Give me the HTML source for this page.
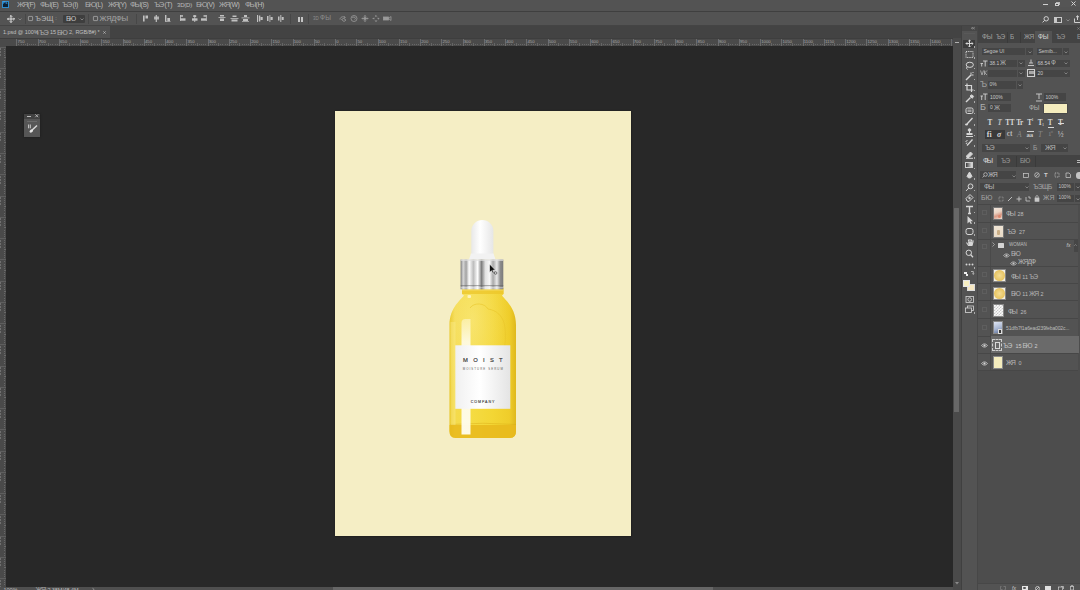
<!DOCTYPE html><html><head><meta charset="utf-8"><style>
*{margin:0;padding:0;box-sizing:border-box}
html,body{width:1080px;height:590px;overflow:hidden;background:#282828;font-family:"Liberation Sans",sans-serif}
div,span,svg{position:absolute}
svg{overflow:visible}
.t{color:#c8c8c8;font-size:6px;line-height:6px;white-space:nowrap}
.cj{background:#b4b4b4;border-radius:.5px}
</style></head><body><div style="left:0px;top:0px;width:1080px;height:11px;background:#535353;"></div><div style="left:0px;top:11px;width:1080px;height:1px;background:#3f3f3f;"></div><div style="left:2px;top:1px;width:7px;height:7px;background:#0a2136;border:.8px solid #2f8fd0"></div><span class="t" style="left:3px;top:2.4px;font-size:3.6px;line-height:3.6px;color:#4aa6ee;font-weight:bold">Ps</span><span class="t" style="left:17px;top:1.08px;font-size:7.80px;line-height:7.80px;letter-spacing:-1.46px;color:#d0d0d0;opacity:0.72">ЖЯ</span><span class="t" style="left:27.6px;top:1.8px;font-size:6.8px;line-height:6.8px;color:#bdbdbd;letter-spacing:-.4px">(F)</span><span class="t" style="left:40px;top:1.08px;font-size:7.80px;line-height:7.80px;letter-spacing:-1.46px;color:#d0d0d0;opacity:0.72">ФЫ</span><span class="t" style="left:50.6px;top:1.8px;font-size:6.8px;line-height:6.8px;color:#bdbdbd;letter-spacing:-.4px">(E)</span><span class="t" style="left:62px;top:1.08px;font-size:7.80px;line-height:7.80px;letter-spacing:-1.46px;color:#d0d0d0;opacity:0.72">ЪЭ</span><span class="t" style="left:72.6px;top:1.8px;font-size:6.8px;line-height:6.8px;color:#bdbdbd;letter-spacing:-.4px">(I)</span><span class="t" style="left:85px;top:1.08px;font-size:7.80px;line-height:7.80px;letter-spacing:-1.46px;color:#d0d0d0;opacity:0.72">БЮ</span><span class="t" style="left:95.6px;top:1.8px;font-size:6.8px;line-height:6.8px;color:#bdbdbd;letter-spacing:-.4px">(L)</span><span class="t" style="left:108px;top:1.08px;font-size:7.80px;line-height:7.80px;letter-spacing:-1.46px;color:#d0d0d0;opacity:0.72">ЖЯ</span><span class="t" style="left:118.6px;top:1.8px;font-size:6.8px;line-height:6.8px;color:#bdbdbd;letter-spacing:-.4px">(Y)</span><span class="t" style="left:130px;top:1.08px;font-size:7.80px;line-height:7.80px;letter-spacing:-1.46px;color:#d0d0d0;opacity:0.72">ФЫ</span><span class="t" style="left:140.6px;top:1.8px;font-size:6.8px;line-height:6.8px;color:#bdbdbd;letter-spacing:-.4px">(S)</span><span class="t" style="left:154px;top:1.08px;font-size:7.80px;line-height:7.80px;letter-spacing:-1.46px;color:#d0d0d0;opacity:0.72">ЪЭ</span><span class="t" style="left:164.6px;top:1.8px;font-size:6.8px;line-height:6.8px;color:#bdbdbd;letter-spacing:-.4px">(T)</span><span class="t" style="left:177px;top:2.3px;font-size:6px;line-height:6px;color:#bdbdbd;letter-spacing:-.2px">3D(D)</span><span class="t" style="left:196px;top:1.08px;font-size:7.80px;line-height:7.80px;letter-spacing:-1.46px;color:#d0d0d0;opacity:0.72">БЮ</span><span class="t" style="left:206.6px;top:1.8px;font-size:6.8px;line-height:6.8px;color:#bdbdbd;letter-spacing:-.4px">(V)</span><span class="t" style="left:219px;top:1.08px;font-size:7.80px;line-height:7.80px;letter-spacing:-1.46px;color:#d0d0d0;opacity:0.72">ЖЯ</span><span class="t" style="left:229.6px;top:1.8px;font-size:6.8px;line-height:6.8px;color:#bdbdbd;letter-spacing:-.4px">(W)</span><span class="t" style="left:245px;top:1.08px;font-size:7.80px;line-height:7.80px;letter-spacing:-1.46px;color:#d0d0d0;opacity:0.72">ФЫ</span><span class="t" style="left:255.6px;top:1.8px;font-size:6.8px;line-height:6.8px;color:#bdbdbd;letter-spacing:-.4px">(H)</span><div style="left:1040px;top:0px;width:40px;height:7px;background:#555555;"></div><div style="left:1043px;top:4px;width:5px;height:1px;background:#cfcfcf;"></div><div style="left:1056px;top:1.5px;width:4px;height:3px;background:transparent;border:1px solid #b8b8b8"></div><div style="left:1055px;top:2.5px;width:4px;height:3px;background:#555555;border:1px solid #d0d0d0"></div><svg style="left:1071px;top:1px" width="5" height="5" viewBox="0 0 5 5" fill="none" stroke="#d2d2d2" stroke-width="1"><path d="M0.5 0.5L4.5 4.5M4.5 0.5L0.5 4.5"/></svg><div style="left:0px;top:12px;width:1080px;height:13px;background:#535353;"></div><div style="left:0px;top:25px;width:1080px;height:1px;background:#444444;"></div><svg style="left:7px;top:15px" width="8" height="8" viewBox="0 0 8 8" fill="none" stroke="#e0e0e0" stroke-width="1"><path d="M4 0.5V7.5M0.5 4H7.5"/><path d="M2.8 1.7L4 0.5L5.2 1.7M2.8 6.3L4 7.5L5.2 6.3M1.7 2.8L0.5 4L1.7 5.2M6.3 2.8L7.5 4L6.3 5.2"/></svg><svg style="left:18px;top:18px" width="4" height="3" viewBox="0 0 4 3" fill="none" stroke="#9a9a9a" stroke-width="0.7"><path d="M0.5 0.5L2 2L3.5 0.5"/></svg><div style="left:25px;top:14px;width:1px;height:10px;background:#474747;"></div><svg style="left:27.8px;top:16.2px" width="5" height="5" viewBox="0 0 5 5" fill="none" stroke="#a8a8a8" stroke-width="0.8"><rect x=".4" y=".4" width="4.2" height="4.2" rx=".6"/></svg><span class="t" style="left:35px;top:14.61px;font-size:7.54px;line-height:7.54px;letter-spacing:0.02px;color:#d0d0d0;opacity:0.78">ЪЭЩ</span><span class="t" style="left:55.3px;top:15.8px;font-size:5.5px;line-height:5.5px;color:#b0b0b0;">:</span><div style="left:63px;top:15px;width:22px;height:8px;background:#3e3e3e;border-radius:1px"></div><span class="t" style="left:66px;top:15.96px;font-size:7.15px;line-height:7.15px;letter-spacing:-1.65px;color:#d0d0d0;opacity:0.91">БЮ</span><svg style="left:80px;top:18px" width="4" height="3" viewBox="0 0 4 3" fill="none" stroke="#a0a0a0" stroke-width="0.7"><path d="M0.5 0.5L2 2L3.5 0.5"/></svg><div style="left:88px;top:14px;width:1px;height:10px;background:#474747;"></div><svg style="left:92.8px;top:16.2px" width="5" height="5" viewBox="0 0 5 5" fill="none" stroke="#a8a8a8" stroke-width="0.8"><rect x=".4" y=".4" width="4.2" height="4.2" rx=".6"/></svg><span class="t" style="left:99.5px;top:14.61px;font-size:7.54px;line-height:7.54px;letter-spacing:-0.28px;color:#d0d0d0;opacity:0.65">ЖЯДФЫ</span><div style="left:136px;top:14px;width:1px;height:10px;background:#474747;"></div><svg style="left:143px;top:15.3px" width="7" height="7" viewBox="0 0 7 7" fill="none" stroke="#c0c0c0" stroke-width="0.8"><rect x="0" y="0.5" width="1.6" height="6" fill="#c0c0c0" stroke="none"/><rect x="2.5" y="0.5" width="2.5" height="3" fill="#c0c0c0" stroke="none"/></svg><svg style="left:154px;top:15.3px" width="7" height="7" viewBox="0 0 7 7" fill="none" stroke="#c0c0c0" stroke-width="0.8"><rect x="1.7" y="0" width="1.2" height="7" fill="#c0c0c0" stroke="none"/><rect x="0" y="1.5" width="5" height="3" fill="#c0c0c0" stroke="none" opacity=".85"/></svg><svg style="left:165px;top:15.3px" width="7" height="7" viewBox="0 0 7 7" fill="none" stroke="#c0c0c0" stroke-width="0.8"><rect x="0" y="0" width="1.4" height="6.5" fill="#c0c0c0" stroke="none"/><rect x="2.3" y="3" width="2.7" height="3" fill="#c0c0c0" stroke="none"/><rect x="0" y="6.2" width="5.5" height=".7" fill="#c0c0c0" stroke="none"/></svg><svg style="left:180px;top:15.3px" width="7" height="7" viewBox="0 0 7 7" fill="none" stroke="#c0c0c0" stroke-width="0.8"><rect x="0" y="0.2" width="3" height="1.5" fill="#c0c0c0" stroke="none"/><rect x="0" y="3.3" width="5.5" height="2.4" fill="#c0c0c0" stroke="none"/><rect x="0" y="0" width=".8" height="6" fill="#c0c0c0" stroke="none"/></svg><svg style="left:191.5px;top:15.3px" width="7" height="7" viewBox="0 0 7 7" fill="none" stroke="#c0c0c0" stroke-width="0.8"><rect x="1.2" y="0.2" width="3" height="1.8" fill="#c0c0c0" stroke="none"/><rect x="0" y="3.3" width="5.5" height="2.4" fill="#c0c0c0" stroke="none"/><rect x="2.3" y="0" width=".9" height="7" fill="#c0c0c0" stroke="none"/></svg><svg style="left:201px;top:15.3px" width="7" height="7" viewBox="0 0 7 7" fill="none" stroke="#c0c0c0" stroke-width="0.8"><rect x="2.5" y="0.2" width="3" height="1.5" fill="#c0c0c0" stroke="none"/><rect x="0" y="3.3" width="5.5" height="2.4" fill="#c0c0c0" stroke="none"/><rect x="4.9" y="0" width=".8" height="6" fill="#c0c0c0" stroke="none"/></svg><svg style="left:219px;top:15.3px" width="7" height="7" viewBox="0 0 7 7" fill="none" stroke="#c0c0c0" stroke-width="0.8"><rect x="1" y="0" width="4" height="1.5" fill="#c0c0c0" stroke="none"/><rect x="-.5" y="2" width="7" height=".8" fill="#c0c0c0" stroke="none"/><rect x="1" y="3.5" width="4" height="2.5" fill="#c0c0c0" stroke="none"/></svg><svg style="left:231px;top:15.3px" width="7" height="7" viewBox="0 0 7 7" fill="none" stroke="#c0c0c0" stroke-width="0.8"><rect x="1.5" y="0.5" width="4" height="1.5" fill="#c0c0c0" stroke="none"/><rect x="-.5" y="3" width="8" height=".8" fill="#c0c0c0" stroke="none"/><rect x="0.5" y="4.5" width="6" height="2" fill="#c0c0c0" stroke="none"/></svg><svg style="left:242px;top:15.3px" width="7" height="7" viewBox="0 0 7 7" fill="none" stroke="#c0c0c0" stroke-width="0.8"><rect x="2" y="0" width="3" height="2" fill="#c0c0c0" stroke="none"/><rect x="-.5" y="2.5" width="8" height=".8" fill="#c0c0c0" stroke="none"/><rect x="1" y="4" width="5" height="2" fill="#c0c0c0" stroke="none"/><rect x="0" y="6.3" width="7" height=".7" fill="#c0c0c0" stroke="none"/></svg><svg style="left:256.5px;top:15.3px" width="7" height="7" viewBox="0 0 7 7" fill="none" stroke="#c0c0c0" stroke-width="0.8"><rect x="0" y="0" width="1" height="7" fill="#c0c0c0" stroke="none"/><rect x="1.8" y="0.5" width="1.5" height="6" fill="#c0c0c0" stroke="none"/><rect x="3.5" y="2" width="2.2" height="3" fill="#c0c0c0" stroke="none"/></svg><svg style="left:267px;top:15.3px" width="7" height="7" viewBox="0 0 7 7" fill="none" stroke="#c0c0c0" stroke-width="0.8"><rect x="0" y="1" width="1.5" height="5" fill="#c0c0c0" stroke="none"/><rect x="2.5" y="0" width=".8" height="7" fill="#c0c0c0" stroke="none"/><rect x="3.5" y="2" width="2.2" height="3" fill="#c0c0c0" stroke="none"/></svg><svg style="left:278px;top:15.3px" width="7" height="7" viewBox="0 0 7 7" fill="none" stroke="#c0c0c0" stroke-width="0.8"><rect x="0" y="1.5" width="1.5" height="4" fill="#c0c0c0" stroke="none"/><rect x="2.3" y="0" width="1" height="7" fill="#c0c0c0" stroke="none"/><rect x="3.7" y="2" width="2" height="3" fill="#c0c0c0" stroke="none"/></svg><div style="left:290px;top:14px;width:1px;height:10px;background:#474747;"></div><div style="left:297.5px;top:16.5px;width:2px;height:5px;background:#c4c4c4;"></div><div style="left:300.5px;top:16.5px;width:2px;height:5px;background:#c4c4c4;"></div><div style="left:308px;top:14px;width:1px;height:10px;background:#474747;"></div><span class="t" style="left:313px;top:16.5px;font-size:4.5px;line-height:4.5px;color:#8c8c8c;">3D</span><span class="t" style="left:320px;top:15.23px;font-size:6.50px;line-height:6.50px;letter-spacing:0.41px;color:#d0d0d0;opacity:0.45">ФЫ</span><svg style="left:339px;top:14.8px" width="8" height="7" viewBox="0 0 8 7" fill="none" stroke="#9a9a9a" stroke-width="0.8"><path d="M1 4.5C1 2 4 1 6 2.5M5 1.2L6.3 2.6L4.8 3.4"/><path d="M2.5 4.5L4.5 3.5L7 5L5 6.5Z"/></svg><svg style="left:350px;top:14.8px" width="8" height="7" viewBox="0 0 8 7" fill="none" stroke="#9a9a9a" stroke-width="0.8"><circle cx="4" cy="3.5" r="3"/><path d="M2.2 2.8C3 1.8 5 1.8 5.6 3.2L4.6 4.6"/></svg><svg style="left:361px;top:14.8px" width="8" height="7" viewBox="0 0 8 7" fill="none" stroke="#9a9a9a" stroke-width="0.8"><path d="M4 0.5V6.5M1 3.5H7M3 1.5L4 .5L5 1.5M3 5.5L4 6.5L5 5.5M2 2.5L1 3.5L2 4.5M6 2.5L7 3.5L6 4.5"/><circle cx="4" cy="3.5" r="1" fill="#9a9a9a"/></svg><svg style="left:372px;top:14.8px" width="8" height="7" viewBox="0 0 8 7" fill="none" stroke="#9a9a9a" stroke-width="0.8"><path d="M4 0.5V2M4 5V6.5M1 3.5H2.5M5.5 3.5H7M3.2 1.3L4 .5L4.8 1.3M3.2 5.7L4 6.5L4.8 5.7M1.8 2.7L1 3.5L1.8 4.3M6.2 2.7L7 3.5L6.2 4.3"/></svg><svg style="left:383px;top:14.8px" width="8" height="7" viewBox="0 0 8 7" fill="none" stroke="#9a9a9a" stroke-width="0.8"><rect x=".5" y="2" width="5" height="3" fill="#9a9a9a"/><path d="M5.5 3.5L8 1.5V5.5Z"/></svg><svg style="left:1042px;top:16px" width="7" height="7" viewBox="0 0 7 7" fill="none" stroke="#d2d2d2" stroke-width="1"><circle cx="4.2" cy="2.8" r="2.2"/><path d="M2.6 4.4L0.6 6.4"/></svg><div style="left:1054px;top:16.5px;width:7.5px;height:6px;background:transparent;border:.9px solid #c8c8c8"></div><div style="left:1054.8px;top:17.3px;width:2.3px;height:4.4px;background:#c8c8c8;"></div><svg style="left:1066px;top:19px" width="4" height="3" viewBox="0 0 4 3" fill="none" stroke="#a0a0a0" stroke-width="0.7"><path d="M0.5 0.5L2 2L3.5 0.5"/></svg><svg style="left:1074px;top:15px" width="7" height="8" viewBox="0 0 7 8" fill="none" stroke="#cfcfcf" stroke-width="1"><path d="M0.5 3.5V7.5H6.5V3.5M3.5 5V0.8M2 2.2L3.5 0.8L5 2.2"/></svg><div style="left:0px;top:26px;width:961px;height:12px;background:#434343;"></div><div style="left:0px;top:26px;width:110px;height:12px;background:#515151;"></div><span class="t" style="left:3px;top:30px;font-size:5.5px;line-height:5.5px;color:#c0c0c0;letter-spacing:-.05px">1.psd @ 100%</span><span class="t" style="left:36.6px;top:30px;font-size:5.5px;line-height:5.5px;color:#c0c0c0;">(</span><span class="t" style="left:38.9px;top:29.14px;font-size:7.28px;line-height:7.28px;letter-spacing:-1.26px;color:#d0d0d0;opacity:0.72">ЪЭ</span><span class="t" style="left:50px;top:30px;font-size:5.5px;line-height:5.5px;color:#c0c0c0;">15</span><span class="t" style="left:57px;top:29.14px;font-size:7.28px;line-height:7.28px;letter-spacing:-1.26px;color:#d0d0d0;opacity:0.72">БЮ</span><span class="t" style="left:69px;top:30px;font-size:5.5px;line-height:5.5px;color:#c0c0c0;">2,</span><span class="t" style="left:75.5px;top:30px;font-size:5.5px;line-height:5.5px;color:#c0c0c0;letter-spacing:-.1px">RGB/8#)</span><span class="t" style="left:97.5px;top:30px;font-size:5.5px;line-height:5.5px;color:#c0c0c0;">*</span><svg style="left:102.5px;top:30.8px" width="3" height="3" viewBox="0 0 3 3" fill="none" stroke="#bdbdbd" stroke-width="0.7"><path d="M0.3 0.3L2.7 2.7M2.7 0.3L0.3 2.7"/></svg><div style="left:0px;top:38px;width:953px;height:8px;background:#4a4a4a;"></div><div style="left:0px;top:38px;width:953px;height:0.6px;background:#3e3e3e;"></div><div style="left:0px;top:46px;width:6px;height:541px;background:#4a4a4a;"></div><div style="left:5.5px;top:46px;width:0.6px;height:541px;background:#3f3f3f;"></div><div style="left:16.25px;top:39px;width:.7px;height:6.5px;background:#6c6c6c"></div><span class="t" style="left:17.45px;top:39.5px;font-size:4.3px;line-height:4.3px;color:#a8a8a8">750</span><div style="left:18.38px;top:44px;width:.7px;height:1.2px;background:#686868"></div><div style="left:20.50px;top:44px;width:.7px;height:1.2px;background:#686868"></div><div style="left:22.62px;top:44px;width:.7px;height:1.2px;background:#686868"></div><div style="left:24.75px;top:44px;width:.7px;height:1.2px;background:#686868"></div><div style="left:26.88px;top:43px;width:.7px;height:2.5px;background:#666"></div><div style="left:29.00px;top:44px;width:.7px;height:1.2px;background:#686868"></div><div style="left:31.12px;top:44px;width:.7px;height:1.2px;background:#686868"></div><div style="left:33.25px;top:44px;width:.7px;height:1.2px;background:#686868"></div><div style="left:35.38px;top:44px;width:.7px;height:1.2px;background:#686868"></div><div style="left:37.50px;top:39px;width:.7px;height:6.5px;background:#6c6c6c"></div><span class="t" style="left:38.70px;top:39.5px;font-size:4.3px;line-height:4.3px;color:#a8a8a8">700</span><div style="left:39.62px;top:44px;width:.7px;height:1.2px;background:#686868"></div><div style="left:41.75px;top:44px;width:.7px;height:1.2px;background:#686868"></div><div style="left:43.88px;top:44px;width:.7px;height:1.2px;background:#686868"></div><div style="left:46.00px;top:44px;width:.7px;height:1.2px;background:#686868"></div><div style="left:48.12px;top:43px;width:.7px;height:2.5px;background:#666"></div><div style="left:50.25px;top:44px;width:.7px;height:1.2px;background:#686868"></div><div style="left:52.38px;top:44px;width:.7px;height:1.2px;background:#686868"></div><div style="left:54.50px;top:44px;width:.7px;height:1.2px;background:#686868"></div><div style="left:56.62px;top:44px;width:.7px;height:1.2px;background:#686868"></div><div style="left:58.75px;top:39px;width:.7px;height:6.5px;background:#6c6c6c"></div><span class="t" style="left:59.95px;top:39.5px;font-size:4.3px;line-height:4.3px;color:#a8a8a8">650</span><div style="left:60.88px;top:44px;width:.7px;height:1.2px;background:#686868"></div><div style="left:63.00px;top:44px;width:.7px;height:1.2px;background:#686868"></div><div style="left:65.12px;top:44px;width:.7px;height:1.2px;background:#686868"></div><div style="left:67.25px;top:44px;width:.7px;height:1.2px;background:#686868"></div><div style="left:69.38px;top:43px;width:.7px;height:2.5px;background:#666"></div><div style="left:71.50px;top:44px;width:.7px;height:1.2px;background:#686868"></div><div style="left:73.62px;top:44px;width:.7px;height:1.2px;background:#686868"></div><div style="left:75.75px;top:44px;width:.7px;height:1.2px;background:#686868"></div><div style="left:77.88px;top:44px;width:.7px;height:1.2px;background:#686868"></div><div style="left:80.00px;top:39px;width:.7px;height:6.5px;background:#6c6c6c"></div><span class="t" style="left:81.20px;top:39.5px;font-size:4.3px;line-height:4.3px;color:#a8a8a8">600</span><div style="left:82.12px;top:44px;width:.7px;height:1.2px;background:#686868"></div><div style="left:84.25px;top:44px;width:.7px;height:1.2px;background:#686868"></div><div style="left:86.38px;top:44px;width:.7px;height:1.2px;background:#686868"></div><div style="left:88.50px;top:44px;width:.7px;height:1.2px;background:#686868"></div><div style="left:90.62px;top:43px;width:.7px;height:2.5px;background:#666"></div><div style="left:92.75px;top:44px;width:.7px;height:1.2px;background:#686868"></div><div style="left:94.88px;top:44px;width:.7px;height:1.2px;background:#686868"></div><div style="left:97.00px;top:44px;width:.7px;height:1.2px;background:#686868"></div><div style="left:99.12px;top:44px;width:.7px;height:1.2px;background:#686868"></div><div style="left:101.25px;top:39px;width:.7px;height:6.5px;background:#6c6c6c"></div><span class="t" style="left:102.45px;top:39.5px;font-size:4.3px;line-height:4.3px;color:#a8a8a8">550</span><div style="left:103.38px;top:44px;width:.7px;height:1.2px;background:#686868"></div><div style="left:105.50px;top:44px;width:.7px;height:1.2px;background:#686868"></div><div style="left:107.62px;top:44px;width:.7px;height:1.2px;background:#686868"></div><div style="left:109.75px;top:44px;width:.7px;height:1.2px;background:#686868"></div><div style="left:111.88px;top:43px;width:.7px;height:2.5px;background:#666"></div><div style="left:114.00px;top:44px;width:.7px;height:1.2px;background:#686868"></div><div style="left:116.12px;top:44px;width:.7px;height:1.2px;background:#686868"></div><div style="left:118.25px;top:44px;width:.7px;height:1.2px;background:#686868"></div><div style="left:120.38px;top:44px;width:.7px;height:1.2px;background:#686868"></div><div style="left:122.50px;top:39px;width:.7px;height:6.5px;background:#6c6c6c"></div><span class="t" style="left:123.70px;top:39.5px;font-size:4.3px;line-height:4.3px;color:#a8a8a8">500</span><div style="left:124.62px;top:44px;width:.7px;height:1.2px;background:#686868"></div><div style="left:126.75px;top:44px;width:.7px;height:1.2px;background:#686868"></div><div style="left:128.88px;top:44px;width:.7px;height:1.2px;background:#686868"></div><div style="left:131.00px;top:44px;width:.7px;height:1.2px;background:#686868"></div><div style="left:133.12px;top:43px;width:.7px;height:2.5px;background:#666"></div><div style="left:135.25px;top:44px;width:.7px;height:1.2px;background:#686868"></div><div style="left:137.38px;top:44px;width:.7px;height:1.2px;background:#686868"></div><div style="left:139.50px;top:44px;width:.7px;height:1.2px;background:#686868"></div><div style="left:141.62px;top:44px;width:.7px;height:1.2px;background:#686868"></div><div style="left:143.75px;top:39px;width:.7px;height:6.5px;background:#6c6c6c"></div><span class="t" style="left:144.95px;top:39.5px;font-size:4.3px;line-height:4.3px;color:#a8a8a8">450</span><div style="left:145.88px;top:44px;width:.7px;height:1.2px;background:#686868"></div><div style="left:148.00px;top:44px;width:.7px;height:1.2px;background:#686868"></div><div style="left:150.12px;top:44px;width:.7px;height:1.2px;background:#686868"></div><div style="left:152.25px;top:44px;width:.7px;height:1.2px;background:#686868"></div><div style="left:154.38px;top:43px;width:.7px;height:2.5px;background:#666"></div><div style="left:156.50px;top:44px;width:.7px;height:1.2px;background:#686868"></div><div style="left:158.62px;top:44px;width:.7px;height:1.2px;background:#686868"></div><div style="left:160.75px;top:44px;width:.7px;height:1.2px;background:#686868"></div><div style="left:162.88px;top:44px;width:.7px;height:1.2px;background:#686868"></div><div style="left:165.00px;top:39px;width:.7px;height:6.5px;background:#6c6c6c"></div><span class="t" style="left:166.20px;top:39.5px;font-size:4.3px;line-height:4.3px;color:#a8a8a8">400</span><div style="left:167.12px;top:44px;width:.7px;height:1.2px;background:#686868"></div><div style="left:169.25px;top:44px;width:.7px;height:1.2px;background:#686868"></div><div style="left:171.38px;top:44px;width:.7px;height:1.2px;background:#686868"></div><div style="left:173.50px;top:44px;width:.7px;height:1.2px;background:#686868"></div><div style="left:175.62px;top:43px;width:.7px;height:2.5px;background:#666"></div><div style="left:177.75px;top:44px;width:.7px;height:1.2px;background:#686868"></div><div style="left:179.88px;top:44px;width:.7px;height:1.2px;background:#686868"></div><div style="left:182.00px;top:44px;width:.7px;height:1.2px;background:#686868"></div><div style="left:184.12px;top:44px;width:.7px;height:1.2px;background:#686868"></div><div style="left:186.25px;top:39px;width:.7px;height:6.5px;background:#6c6c6c"></div><span class="t" style="left:187.45px;top:39.5px;font-size:4.3px;line-height:4.3px;color:#a8a8a8">350</span><div style="left:188.38px;top:44px;width:.7px;height:1.2px;background:#686868"></div><div style="left:190.50px;top:44px;width:.7px;height:1.2px;background:#686868"></div><div style="left:192.62px;top:44px;width:.7px;height:1.2px;background:#686868"></div><div style="left:194.75px;top:44px;width:.7px;height:1.2px;background:#686868"></div><div style="left:196.88px;top:43px;width:.7px;height:2.5px;background:#666"></div><div style="left:199.00px;top:44px;width:.7px;height:1.2px;background:#686868"></div><div style="left:201.12px;top:44px;width:.7px;height:1.2px;background:#686868"></div><div style="left:203.25px;top:44px;width:.7px;height:1.2px;background:#686868"></div><div style="left:205.38px;top:44px;width:.7px;height:1.2px;background:#686868"></div><div style="left:207.50px;top:39px;width:.7px;height:6.5px;background:#6c6c6c"></div><span class="t" style="left:208.70px;top:39.5px;font-size:4.3px;line-height:4.3px;color:#a8a8a8">300</span><div style="left:209.62px;top:44px;width:.7px;height:1.2px;background:#686868"></div><div style="left:211.75px;top:44px;width:.7px;height:1.2px;background:#686868"></div><div style="left:213.88px;top:44px;width:.7px;height:1.2px;background:#686868"></div><div style="left:216.00px;top:44px;width:.7px;height:1.2px;background:#686868"></div><div style="left:218.12px;top:43px;width:.7px;height:2.5px;background:#666"></div><div style="left:220.25px;top:44px;width:.7px;height:1.2px;background:#686868"></div><div style="left:222.38px;top:44px;width:.7px;height:1.2px;background:#686868"></div><div style="left:224.50px;top:44px;width:.7px;height:1.2px;background:#686868"></div><div style="left:226.62px;top:44px;width:.7px;height:1.2px;background:#686868"></div><div style="left:228.75px;top:39px;width:.7px;height:6.5px;background:#6c6c6c"></div><span class="t" style="left:229.95px;top:39.5px;font-size:4.3px;line-height:4.3px;color:#a8a8a8">250</span><div style="left:230.88px;top:44px;width:.7px;height:1.2px;background:#686868"></div><div style="left:233.00px;top:44px;width:.7px;height:1.2px;background:#686868"></div><div style="left:235.12px;top:44px;width:.7px;height:1.2px;background:#686868"></div><div style="left:237.25px;top:44px;width:.7px;height:1.2px;background:#686868"></div><div style="left:239.38px;top:43px;width:.7px;height:2.5px;background:#666"></div><div style="left:241.50px;top:44px;width:.7px;height:1.2px;background:#686868"></div><div style="left:243.62px;top:44px;width:.7px;height:1.2px;background:#686868"></div><div style="left:245.75px;top:44px;width:.7px;height:1.2px;background:#686868"></div><div style="left:247.88px;top:44px;width:.7px;height:1.2px;background:#686868"></div><div style="left:250.00px;top:39px;width:.7px;height:6.5px;background:#6c6c6c"></div><span class="t" style="left:251.20px;top:39.5px;font-size:4.3px;line-height:4.3px;color:#a8a8a8">200</span><div style="left:252.12px;top:44px;width:.7px;height:1.2px;background:#686868"></div><div style="left:254.25px;top:44px;width:.7px;height:1.2px;background:#686868"></div><div style="left:256.38px;top:44px;width:.7px;height:1.2px;background:#686868"></div><div style="left:258.50px;top:44px;width:.7px;height:1.2px;background:#686868"></div><div style="left:260.62px;top:43px;width:.7px;height:2.5px;background:#666"></div><div style="left:262.75px;top:44px;width:.7px;height:1.2px;background:#686868"></div><div style="left:264.88px;top:44px;width:.7px;height:1.2px;background:#686868"></div><div style="left:267.00px;top:44px;width:.7px;height:1.2px;background:#686868"></div><div style="left:269.12px;top:44px;width:.7px;height:1.2px;background:#686868"></div><div style="left:271.25px;top:39px;width:.7px;height:6.5px;background:#6c6c6c"></div><span class="t" style="left:272.45px;top:39.5px;font-size:4.3px;line-height:4.3px;color:#a8a8a8">150</span><div style="left:273.38px;top:44px;width:.7px;height:1.2px;background:#686868"></div><div style="left:275.50px;top:44px;width:.7px;height:1.2px;background:#686868"></div><div style="left:277.62px;top:44px;width:.7px;height:1.2px;background:#686868"></div><div style="left:279.75px;top:44px;width:.7px;height:1.2px;background:#686868"></div><div style="left:281.88px;top:43px;width:.7px;height:2.5px;background:#666"></div><div style="left:284.00px;top:44px;width:.7px;height:1.2px;background:#686868"></div><div style="left:286.12px;top:44px;width:.7px;height:1.2px;background:#686868"></div><div style="left:288.25px;top:44px;width:.7px;height:1.2px;background:#686868"></div><div style="left:290.38px;top:44px;width:.7px;height:1.2px;background:#686868"></div><div style="left:292.50px;top:39px;width:.7px;height:6.5px;background:#6c6c6c"></div><span class="t" style="left:293.70px;top:39.5px;font-size:4.3px;line-height:4.3px;color:#a8a8a8">100</span><div style="left:294.62px;top:44px;width:.7px;height:1.2px;background:#686868"></div><div style="left:296.75px;top:44px;width:.7px;height:1.2px;background:#686868"></div><div style="left:298.88px;top:44px;width:.7px;height:1.2px;background:#686868"></div><div style="left:301.00px;top:44px;width:.7px;height:1.2px;background:#686868"></div><div style="left:303.12px;top:43px;width:.7px;height:2.5px;background:#666"></div><div style="left:305.25px;top:44px;width:.7px;height:1.2px;background:#686868"></div><div style="left:307.38px;top:44px;width:.7px;height:1.2px;background:#686868"></div><div style="left:309.50px;top:44px;width:.7px;height:1.2px;background:#686868"></div><div style="left:311.62px;top:44px;width:.7px;height:1.2px;background:#686868"></div><div style="left:313.75px;top:39px;width:.7px;height:6.5px;background:#6c6c6c"></div><span class="t" style="left:314.95px;top:39.5px;font-size:4.3px;line-height:4.3px;color:#a8a8a8">50</span><div style="left:315.88px;top:44px;width:.7px;height:1.2px;background:#686868"></div><div style="left:318.00px;top:44px;width:.7px;height:1.2px;background:#686868"></div><div style="left:320.12px;top:44px;width:.7px;height:1.2px;background:#686868"></div><div style="left:322.25px;top:44px;width:.7px;height:1.2px;background:#686868"></div><div style="left:324.38px;top:43px;width:.7px;height:2.5px;background:#666"></div><div style="left:326.50px;top:44px;width:.7px;height:1.2px;background:#686868"></div><div style="left:328.62px;top:44px;width:.7px;height:1.2px;background:#686868"></div><div style="left:330.75px;top:44px;width:.7px;height:1.2px;background:#686868"></div><div style="left:332.88px;top:44px;width:.7px;height:1.2px;background:#686868"></div><div style="left:335.00px;top:39px;width:.7px;height:6.5px;background:#6c6c6c"></div><span class="t" style="left:336.20px;top:39.5px;font-size:4.3px;line-height:4.3px;color:#a8a8a8">0</span><div style="left:337.12px;top:44px;width:.7px;height:1.2px;background:#686868"></div><div style="left:339.25px;top:44px;width:.7px;height:1.2px;background:#686868"></div><div style="left:341.38px;top:44px;width:.7px;height:1.2px;background:#686868"></div><div style="left:343.50px;top:44px;width:.7px;height:1.2px;background:#686868"></div><div style="left:345.62px;top:43px;width:.7px;height:2.5px;background:#666"></div><div style="left:347.75px;top:44px;width:.7px;height:1.2px;background:#686868"></div><div style="left:349.88px;top:44px;width:.7px;height:1.2px;background:#686868"></div><div style="left:352.00px;top:44px;width:.7px;height:1.2px;background:#686868"></div><div style="left:354.12px;top:44px;width:.7px;height:1.2px;background:#686868"></div><div style="left:356.25px;top:39px;width:.7px;height:6.5px;background:#6c6c6c"></div><span class="t" style="left:357.45px;top:39.5px;font-size:4.3px;line-height:4.3px;color:#a8a8a8">50</span><div style="left:358.38px;top:44px;width:.7px;height:1.2px;background:#686868"></div><div style="left:360.50px;top:44px;width:.7px;height:1.2px;background:#686868"></div><div style="left:362.62px;top:44px;width:.7px;height:1.2px;background:#686868"></div><div style="left:364.75px;top:44px;width:.7px;height:1.2px;background:#686868"></div><div style="left:366.88px;top:43px;width:.7px;height:2.5px;background:#666"></div><div style="left:369.00px;top:44px;width:.7px;height:1.2px;background:#686868"></div><div style="left:371.12px;top:44px;width:.7px;height:1.2px;background:#686868"></div><div style="left:373.25px;top:44px;width:.7px;height:1.2px;background:#686868"></div><div style="left:375.38px;top:44px;width:.7px;height:1.2px;background:#686868"></div><div style="left:377.50px;top:39px;width:.7px;height:6.5px;background:#6c6c6c"></div><span class="t" style="left:378.70px;top:39.5px;font-size:4.3px;line-height:4.3px;color:#a8a8a8">100</span><div style="left:379.62px;top:44px;width:.7px;height:1.2px;background:#686868"></div><div style="left:381.75px;top:44px;width:.7px;height:1.2px;background:#686868"></div><div style="left:383.88px;top:44px;width:.7px;height:1.2px;background:#686868"></div><div style="left:386.00px;top:44px;width:.7px;height:1.2px;background:#686868"></div><div style="left:388.12px;top:43px;width:.7px;height:2.5px;background:#666"></div><div style="left:390.25px;top:44px;width:.7px;height:1.2px;background:#686868"></div><div style="left:392.38px;top:44px;width:.7px;height:1.2px;background:#686868"></div><div style="left:394.50px;top:44px;width:.7px;height:1.2px;background:#686868"></div><div style="left:396.62px;top:44px;width:.7px;height:1.2px;background:#686868"></div><div style="left:398.75px;top:39px;width:.7px;height:6.5px;background:#6c6c6c"></div><span class="t" style="left:399.95px;top:39.5px;font-size:4.3px;line-height:4.3px;color:#a8a8a8">150</span><div style="left:400.88px;top:44px;width:.7px;height:1.2px;background:#686868"></div><div style="left:403.00px;top:44px;width:.7px;height:1.2px;background:#686868"></div><div style="left:405.12px;top:44px;width:.7px;height:1.2px;background:#686868"></div><div style="left:407.25px;top:44px;width:.7px;height:1.2px;background:#686868"></div><div style="left:409.38px;top:43px;width:.7px;height:2.5px;background:#666"></div><div style="left:411.50px;top:44px;width:.7px;height:1.2px;background:#686868"></div><div style="left:413.62px;top:44px;width:.7px;height:1.2px;background:#686868"></div><div style="left:415.75px;top:44px;width:.7px;height:1.2px;background:#686868"></div><div style="left:417.88px;top:44px;width:.7px;height:1.2px;background:#686868"></div><div style="left:420.00px;top:39px;width:.7px;height:6.5px;background:#6c6c6c"></div><span class="t" style="left:421.20px;top:39.5px;font-size:4.3px;line-height:4.3px;color:#a8a8a8">200</span><div style="left:422.12px;top:44px;width:.7px;height:1.2px;background:#686868"></div><div style="left:424.25px;top:44px;width:.7px;height:1.2px;background:#686868"></div><div style="left:426.38px;top:44px;width:.7px;height:1.2px;background:#686868"></div><div style="left:428.50px;top:44px;width:.7px;height:1.2px;background:#686868"></div><div style="left:430.62px;top:43px;width:.7px;height:2.5px;background:#666"></div><div style="left:432.75px;top:44px;width:.7px;height:1.2px;background:#686868"></div><div style="left:434.88px;top:44px;width:.7px;height:1.2px;background:#686868"></div><div style="left:437.00px;top:44px;width:.7px;height:1.2px;background:#686868"></div><div style="left:439.12px;top:44px;width:.7px;height:1.2px;background:#686868"></div><div style="left:441.25px;top:39px;width:.7px;height:6.5px;background:#6c6c6c"></div><span class="t" style="left:442.45px;top:39.5px;font-size:4.3px;line-height:4.3px;color:#a8a8a8">250</span><div style="left:443.38px;top:44px;width:.7px;height:1.2px;background:#686868"></div><div style="left:445.50px;top:44px;width:.7px;height:1.2px;background:#686868"></div><div style="left:447.62px;top:44px;width:.7px;height:1.2px;background:#686868"></div><div style="left:449.75px;top:44px;width:.7px;height:1.2px;background:#686868"></div><div style="left:451.88px;top:43px;width:.7px;height:2.5px;background:#666"></div><div style="left:454.00px;top:44px;width:.7px;height:1.2px;background:#686868"></div><div style="left:456.12px;top:44px;width:.7px;height:1.2px;background:#686868"></div><div style="left:458.25px;top:44px;width:.7px;height:1.2px;background:#686868"></div><div style="left:460.38px;top:44px;width:.7px;height:1.2px;background:#686868"></div><div style="left:462.50px;top:39px;width:.7px;height:6.5px;background:#6c6c6c"></div><span class="t" style="left:463.70px;top:39.5px;font-size:4.3px;line-height:4.3px;color:#a8a8a8">300</span><div style="left:464.62px;top:44px;width:.7px;height:1.2px;background:#686868"></div><div style="left:466.75px;top:44px;width:.7px;height:1.2px;background:#686868"></div><div style="left:468.88px;top:44px;width:.7px;height:1.2px;background:#686868"></div><div style="left:471.00px;top:44px;width:.7px;height:1.2px;background:#686868"></div><div style="left:473.12px;top:43px;width:.7px;height:2.5px;background:#666"></div><div style="left:475.25px;top:44px;width:.7px;height:1.2px;background:#686868"></div><div style="left:477.38px;top:44px;width:.7px;height:1.2px;background:#686868"></div><div style="left:479.50px;top:44px;width:.7px;height:1.2px;background:#686868"></div><div style="left:481.62px;top:44px;width:.7px;height:1.2px;background:#686868"></div><div style="left:483.75px;top:39px;width:.7px;height:6.5px;background:#6c6c6c"></div><span class="t" style="left:484.95px;top:39.5px;font-size:4.3px;line-height:4.3px;color:#a8a8a8">350</span><div style="left:485.88px;top:44px;width:.7px;height:1.2px;background:#686868"></div><div style="left:488.00px;top:44px;width:.7px;height:1.2px;background:#686868"></div><div style="left:490.12px;top:44px;width:.7px;height:1.2px;background:#686868"></div><div style="left:492.25px;top:44px;width:.7px;height:1.2px;background:#686868"></div><div style="left:494.38px;top:43px;width:.7px;height:2.5px;background:#666"></div><div style="left:496.50px;top:44px;width:.7px;height:1.2px;background:#686868"></div><div style="left:498.62px;top:44px;width:.7px;height:1.2px;background:#686868"></div><div style="left:500.75px;top:44px;width:.7px;height:1.2px;background:#686868"></div><div style="left:502.88px;top:44px;width:.7px;height:1.2px;background:#686868"></div><div style="left:505.00px;top:39px;width:.7px;height:6.5px;background:#6c6c6c"></div><span class="t" style="left:506.20px;top:39.5px;font-size:4.3px;line-height:4.3px;color:#a8a8a8">400</span><div style="left:507.12px;top:44px;width:.7px;height:1.2px;background:#686868"></div><div style="left:509.25px;top:44px;width:.7px;height:1.2px;background:#686868"></div><div style="left:511.38px;top:44px;width:.7px;height:1.2px;background:#686868"></div><div style="left:513.50px;top:44px;width:.7px;height:1.2px;background:#686868"></div><div style="left:515.62px;top:43px;width:.7px;height:2.5px;background:#666"></div><div style="left:517.75px;top:44px;width:.7px;height:1.2px;background:#686868"></div><div style="left:519.88px;top:44px;width:.7px;height:1.2px;background:#686868"></div><div style="left:522.00px;top:44px;width:.7px;height:1.2px;background:#686868"></div><div style="left:524.12px;top:44px;width:.7px;height:1.2px;background:#686868"></div><div style="left:526.25px;top:39px;width:.7px;height:6.5px;background:#6c6c6c"></div><span class="t" style="left:527.45px;top:39.5px;font-size:4.3px;line-height:4.3px;color:#a8a8a8">450</span><div style="left:528.38px;top:44px;width:.7px;height:1.2px;background:#686868"></div><div style="left:530.50px;top:44px;width:.7px;height:1.2px;background:#686868"></div><div style="left:532.62px;top:44px;width:.7px;height:1.2px;background:#686868"></div><div style="left:534.75px;top:44px;width:.7px;height:1.2px;background:#686868"></div><div style="left:536.88px;top:43px;width:.7px;height:2.5px;background:#666"></div><div style="left:539.00px;top:44px;width:.7px;height:1.2px;background:#686868"></div><div style="left:541.12px;top:44px;width:.7px;height:1.2px;background:#686868"></div><div style="left:543.25px;top:44px;width:.7px;height:1.2px;background:#686868"></div><div style="left:545.38px;top:44px;width:.7px;height:1.2px;background:#686868"></div><div style="left:547.50px;top:39px;width:.7px;height:6.5px;background:#6c6c6c"></div><span class="t" style="left:548.70px;top:39.5px;font-size:4.3px;line-height:4.3px;color:#a8a8a8">500</span><div style="left:549.62px;top:44px;width:.7px;height:1.2px;background:#686868"></div><div style="left:551.75px;top:44px;width:.7px;height:1.2px;background:#686868"></div><div style="left:553.88px;top:44px;width:.7px;height:1.2px;background:#686868"></div><div style="left:556.00px;top:44px;width:.7px;height:1.2px;background:#686868"></div><div style="left:558.12px;top:43px;width:.7px;height:2.5px;background:#666"></div><div style="left:560.25px;top:44px;width:.7px;height:1.2px;background:#686868"></div><div style="left:562.38px;top:44px;width:.7px;height:1.2px;background:#686868"></div><div style="left:564.50px;top:44px;width:.7px;height:1.2px;background:#686868"></div><div style="left:566.62px;top:44px;width:.7px;height:1.2px;background:#686868"></div><div style="left:568.75px;top:39px;width:.7px;height:6.5px;background:#6c6c6c"></div><span class="t" style="left:569.95px;top:39.5px;font-size:4.3px;line-height:4.3px;color:#a8a8a8">550</span><div style="left:570.88px;top:44px;width:.7px;height:1.2px;background:#686868"></div><div style="left:573.00px;top:44px;width:.7px;height:1.2px;background:#686868"></div><div style="left:575.12px;top:44px;width:.7px;height:1.2px;background:#686868"></div><div style="left:577.25px;top:44px;width:.7px;height:1.2px;background:#686868"></div><div style="left:579.38px;top:43px;width:.7px;height:2.5px;background:#666"></div><div style="left:581.50px;top:44px;width:.7px;height:1.2px;background:#686868"></div><div style="left:583.62px;top:44px;width:.7px;height:1.2px;background:#686868"></div><div style="left:585.75px;top:44px;width:.7px;height:1.2px;background:#686868"></div><div style="left:587.88px;top:44px;width:.7px;height:1.2px;background:#686868"></div><div style="left:590.00px;top:39px;width:.7px;height:6.5px;background:#6c6c6c"></div><span class="t" style="left:591.20px;top:39.5px;font-size:4.3px;line-height:4.3px;color:#a8a8a8">600</span><div style="left:592.12px;top:44px;width:.7px;height:1.2px;background:#686868"></div><div style="left:594.25px;top:44px;width:.7px;height:1.2px;background:#686868"></div><div style="left:596.38px;top:44px;width:.7px;height:1.2px;background:#686868"></div><div style="left:598.50px;top:44px;width:.7px;height:1.2px;background:#686868"></div><div style="left:600.62px;top:43px;width:.7px;height:2.5px;background:#666"></div><div style="left:602.75px;top:44px;width:.7px;height:1.2px;background:#686868"></div><div style="left:604.88px;top:44px;width:.7px;height:1.2px;background:#686868"></div><div style="left:607.00px;top:44px;width:.7px;height:1.2px;background:#686868"></div><div style="left:609.12px;top:44px;width:.7px;height:1.2px;background:#686868"></div><div style="left:611.25px;top:39px;width:.7px;height:6.5px;background:#6c6c6c"></div><span class="t" style="left:612.45px;top:39.5px;font-size:4.3px;line-height:4.3px;color:#a8a8a8">650</span><div style="left:613.38px;top:44px;width:.7px;height:1.2px;background:#686868"></div><div style="left:615.50px;top:44px;width:.7px;height:1.2px;background:#686868"></div><div style="left:617.62px;top:44px;width:.7px;height:1.2px;background:#686868"></div><div style="left:619.75px;top:44px;width:.7px;height:1.2px;background:#686868"></div><div style="left:621.88px;top:43px;width:.7px;height:2.5px;background:#666"></div><div style="left:624.00px;top:44px;width:.7px;height:1.2px;background:#686868"></div><div style="left:626.12px;top:44px;width:.7px;height:1.2px;background:#686868"></div><div style="left:628.25px;top:44px;width:.7px;height:1.2px;background:#686868"></div><div style="left:630.38px;top:44px;width:.7px;height:1.2px;background:#686868"></div><div style="left:632.50px;top:39px;width:.7px;height:6.5px;background:#6c6c6c"></div><span class="t" style="left:633.70px;top:39.5px;font-size:4.3px;line-height:4.3px;color:#a8a8a8">700</span><div style="left:634.62px;top:44px;width:.7px;height:1.2px;background:#686868"></div><div style="left:636.75px;top:44px;width:.7px;height:1.2px;background:#686868"></div><div style="left:638.88px;top:44px;width:.7px;height:1.2px;background:#686868"></div><div style="left:641.00px;top:44px;width:.7px;height:1.2px;background:#686868"></div><div style="left:643.12px;top:43px;width:.7px;height:2.5px;background:#666"></div><div style="left:645.25px;top:44px;width:.7px;height:1.2px;background:#686868"></div><div style="left:647.38px;top:44px;width:.7px;height:1.2px;background:#686868"></div><div style="left:649.50px;top:44px;width:.7px;height:1.2px;background:#686868"></div><div style="left:651.62px;top:44px;width:.7px;height:1.2px;background:#686868"></div><div style="left:653.75px;top:39px;width:.7px;height:6.5px;background:#6c6c6c"></div><span class="t" style="left:654.95px;top:39.5px;font-size:4.3px;line-height:4.3px;color:#a8a8a8">750</span><div style="left:655.88px;top:44px;width:.7px;height:1.2px;background:#686868"></div><div style="left:658.00px;top:44px;width:.7px;height:1.2px;background:#686868"></div><div style="left:660.12px;top:44px;width:.7px;height:1.2px;background:#686868"></div><div style="left:662.25px;top:44px;width:.7px;height:1.2px;background:#686868"></div><div style="left:664.38px;top:43px;width:.7px;height:2.5px;background:#666"></div><div style="left:666.50px;top:44px;width:.7px;height:1.2px;background:#686868"></div><div style="left:668.62px;top:44px;width:.7px;height:1.2px;background:#686868"></div><div style="left:670.75px;top:44px;width:.7px;height:1.2px;background:#686868"></div><div style="left:672.88px;top:44px;width:.7px;height:1.2px;background:#686868"></div><div style="left:675.00px;top:39px;width:.7px;height:6.5px;background:#6c6c6c"></div><span class="t" style="left:676.20px;top:39.5px;font-size:4.3px;line-height:4.3px;color:#a8a8a8">800</span><div style="left:677.12px;top:44px;width:.7px;height:1.2px;background:#686868"></div><div style="left:679.25px;top:44px;width:.7px;height:1.2px;background:#686868"></div><div style="left:681.38px;top:44px;width:.7px;height:1.2px;background:#686868"></div><div style="left:683.50px;top:44px;width:.7px;height:1.2px;background:#686868"></div><div style="left:685.62px;top:43px;width:.7px;height:2.5px;background:#666"></div><div style="left:687.75px;top:44px;width:.7px;height:1.2px;background:#686868"></div><div style="left:689.88px;top:44px;width:.7px;height:1.2px;background:#686868"></div><div style="left:692.00px;top:44px;width:.7px;height:1.2px;background:#686868"></div><div style="left:694.12px;top:44px;width:.7px;height:1.2px;background:#686868"></div><div style="left:696.25px;top:39px;width:.7px;height:6.5px;background:#6c6c6c"></div><span class="t" style="left:697.45px;top:39.5px;font-size:4.3px;line-height:4.3px;color:#a8a8a8">850</span><div style="left:698.38px;top:44px;width:.7px;height:1.2px;background:#686868"></div><div style="left:700.50px;top:44px;width:.7px;height:1.2px;background:#686868"></div><div style="left:702.62px;top:44px;width:.7px;height:1.2px;background:#686868"></div><div style="left:704.75px;top:44px;width:.7px;height:1.2px;background:#686868"></div><div style="left:706.88px;top:43px;width:.7px;height:2.5px;background:#666"></div><div style="left:709.00px;top:44px;width:.7px;height:1.2px;background:#686868"></div><div style="left:711.12px;top:44px;width:.7px;height:1.2px;background:#686868"></div><div style="left:713.25px;top:44px;width:.7px;height:1.2px;background:#686868"></div><div style="left:715.38px;top:44px;width:.7px;height:1.2px;background:#686868"></div><div style="left:717.50px;top:39px;width:.7px;height:6.5px;background:#6c6c6c"></div><span class="t" style="left:718.70px;top:39.5px;font-size:4.3px;line-height:4.3px;color:#a8a8a8">900</span><div style="left:719.62px;top:44px;width:.7px;height:1.2px;background:#686868"></div><div style="left:721.75px;top:44px;width:.7px;height:1.2px;background:#686868"></div><div style="left:723.88px;top:44px;width:.7px;height:1.2px;background:#686868"></div><div style="left:726.00px;top:44px;width:.7px;height:1.2px;background:#686868"></div><div style="left:728.12px;top:43px;width:.7px;height:2.5px;background:#666"></div><div style="left:730.25px;top:44px;width:.7px;height:1.2px;background:#686868"></div><div style="left:732.38px;top:44px;width:.7px;height:1.2px;background:#686868"></div><div style="left:734.50px;top:44px;width:.7px;height:1.2px;background:#686868"></div><div style="left:736.62px;top:44px;width:.7px;height:1.2px;background:#686868"></div><div style="left:738.75px;top:39px;width:.7px;height:6.5px;background:#6c6c6c"></div><span class="t" style="left:739.95px;top:39.5px;font-size:4.3px;line-height:4.3px;color:#a8a8a8">950</span><div style="left:740.88px;top:44px;width:.7px;height:1.2px;background:#686868"></div><div style="left:743.00px;top:44px;width:.7px;height:1.2px;background:#686868"></div><div style="left:745.12px;top:44px;width:.7px;height:1.2px;background:#686868"></div><div style="left:747.25px;top:44px;width:.7px;height:1.2px;background:#686868"></div><div style="left:749.38px;top:43px;width:.7px;height:2.5px;background:#666"></div><div style="left:751.50px;top:44px;width:.7px;height:1.2px;background:#686868"></div><div style="left:753.62px;top:44px;width:.7px;height:1.2px;background:#686868"></div><div style="left:755.75px;top:44px;width:.7px;height:1.2px;background:#686868"></div><div style="left:757.88px;top:44px;width:.7px;height:1.2px;background:#686868"></div><div style="left:760.00px;top:39px;width:.7px;height:6.5px;background:#6c6c6c"></div><span class="t" style="left:761.20px;top:39.5px;font-size:4.3px;line-height:4.3px;color:#a8a8a8">1000</span><div style="left:762.12px;top:44px;width:.7px;height:1.2px;background:#686868"></div><div style="left:764.25px;top:44px;width:.7px;height:1.2px;background:#686868"></div><div style="left:766.38px;top:44px;width:.7px;height:1.2px;background:#686868"></div><div style="left:768.50px;top:44px;width:.7px;height:1.2px;background:#686868"></div><div style="left:770.62px;top:43px;width:.7px;height:2.5px;background:#666"></div><div style="left:772.75px;top:44px;width:.7px;height:1.2px;background:#686868"></div><div style="left:774.88px;top:44px;width:.7px;height:1.2px;background:#686868"></div><div style="left:777.00px;top:44px;width:.7px;height:1.2px;background:#686868"></div><div style="left:779.12px;top:44px;width:.7px;height:1.2px;background:#686868"></div><div style="left:781.25px;top:39px;width:.7px;height:6.5px;background:#6c6c6c"></div><span class="t" style="left:782.45px;top:39.5px;font-size:4.3px;line-height:4.3px;color:#a8a8a8">1050</span><div style="left:783.38px;top:44px;width:.7px;height:1.2px;background:#686868"></div><div style="left:785.50px;top:44px;width:.7px;height:1.2px;background:#686868"></div><div style="left:787.62px;top:44px;width:.7px;height:1.2px;background:#686868"></div><div style="left:789.75px;top:44px;width:.7px;height:1.2px;background:#686868"></div><div style="left:791.88px;top:43px;width:.7px;height:2.5px;background:#666"></div><div style="left:794.00px;top:44px;width:.7px;height:1.2px;background:#686868"></div><div style="left:796.12px;top:44px;width:.7px;height:1.2px;background:#686868"></div><div style="left:798.25px;top:44px;width:.7px;height:1.2px;background:#686868"></div><div style="left:800.38px;top:44px;width:.7px;height:1.2px;background:#686868"></div><div style="left:802.50px;top:39px;width:.7px;height:6.5px;background:#6c6c6c"></div><span class="t" style="left:803.70px;top:39.5px;font-size:4.3px;line-height:4.3px;color:#a8a8a8">1100</span><div style="left:804.62px;top:44px;width:.7px;height:1.2px;background:#686868"></div><div style="left:806.75px;top:44px;width:.7px;height:1.2px;background:#686868"></div><div style="left:808.88px;top:44px;width:.7px;height:1.2px;background:#686868"></div><div style="left:811.00px;top:44px;width:.7px;height:1.2px;background:#686868"></div><div style="left:813.12px;top:43px;width:.7px;height:2.5px;background:#666"></div><div style="left:815.25px;top:44px;width:.7px;height:1.2px;background:#686868"></div><div style="left:817.38px;top:44px;width:.7px;height:1.2px;background:#686868"></div><div style="left:819.50px;top:44px;width:.7px;height:1.2px;background:#686868"></div><div style="left:821.62px;top:44px;width:.7px;height:1.2px;background:#686868"></div><div style="left:823.75px;top:39px;width:.7px;height:6.5px;background:#6c6c6c"></div><span class="t" style="left:824.95px;top:39.5px;font-size:4.3px;line-height:4.3px;color:#a8a8a8">1150</span><div style="left:825.88px;top:44px;width:.7px;height:1.2px;background:#686868"></div><div style="left:828.00px;top:44px;width:.7px;height:1.2px;background:#686868"></div><div style="left:830.12px;top:44px;width:.7px;height:1.2px;background:#686868"></div><div style="left:832.25px;top:44px;width:.7px;height:1.2px;background:#686868"></div><div style="left:834.38px;top:43px;width:.7px;height:2.5px;background:#666"></div><div style="left:836.50px;top:44px;width:.7px;height:1.2px;background:#686868"></div><div style="left:838.62px;top:44px;width:.7px;height:1.2px;background:#686868"></div><div style="left:840.75px;top:44px;width:.7px;height:1.2px;background:#686868"></div><div style="left:842.88px;top:44px;width:.7px;height:1.2px;background:#686868"></div><div style="left:845.00px;top:39px;width:.7px;height:6.5px;background:#6c6c6c"></div><span class="t" style="left:846.20px;top:39.5px;font-size:4.3px;line-height:4.3px;color:#a8a8a8">1200</span><div style="left:847.12px;top:44px;width:.7px;height:1.2px;background:#686868"></div><div style="left:849.25px;top:44px;width:.7px;height:1.2px;background:#686868"></div><div style="left:851.38px;top:44px;width:.7px;height:1.2px;background:#686868"></div><div style="left:853.50px;top:44px;width:.7px;height:1.2px;background:#686868"></div><div style="left:855.62px;top:43px;width:.7px;height:2.5px;background:#666"></div><div style="left:857.75px;top:44px;width:.7px;height:1.2px;background:#686868"></div><div style="left:859.88px;top:44px;width:.7px;height:1.2px;background:#686868"></div><div style="left:862.00px;top:44px;width:.7px;height:1.2px;background:#686868"></div><div style="left:864.12px;top:44px;width:.7px;height:1.2px;background:#686868"></div><div style="left:866.25px;top:39px;width:.7px;height:6.5px;background:#6c6c6c"></div><span class="t" style="left:867.45px;top:39.5px;font-size:4.3px;line-height:4.3px;color:#a8a8a8">1250</span><div style="left:868.38px;top:44px;width:.7px;height:1.2px;background:#686868"></div><div style="left:870.50px;top:44px;width:.7px;height:1.2px;background:#686868"></div><div style="left:872.62px;top:44px;width:.7px;height:1.2px;background:#686868"></div><div style="left:874.75px;top:44px;width:.7px;height:1.2px;background:#686868"></div><div style="left:876.88px;top:43px;width:.7px;height:2.5px;background:#666"></div><div style="left:879.00px;top:44px;width:.7px;height:1.2px;background:#686868"></div><div style="left:881.12px;top:44px;width:.7px;height:1.2px;background:#686868"></div><div style="left:883.25px;top:44px;width:.7px;height:1.2px;background:#686868"></div><div style="left:885.38px;top:44px;width:.7px;height:1.2px;background:#686868"></div><div style="left:887.50px;top:39px;width:.7px;height:6.5px;background:#6c6c6c"></div><span class="t" style="left:888.70px;top:39.5px;font-size:4.3px;line-height:4.3px;color:#a8a8a8">1300</span><div style="left:889.62px;top:44px;width:.7px;height:1.2px;background:#686868"></div><div style="left:891.75px;top:44px;width:.7px;height:1.2px;background:#686868"></div><div style="left:893.88px;top:44px;width:.7px;height:1.2px;background:#686868"></div><div style="left:896.00px;top:44px;width:.7px;height:1.2px;background:#686868"></div><div style="left:898.12px;top:43px;width:.7px;height:2.5px;background:#666"></div><div style="left:900.25px;top:44px;width:.7px;height:1.2px;background:#686868"></div><div style="left:902.38px;top:44px;width:.7px;height:1.2px;background:#686868"></div><div style="left:904.50px;top:44px;width:.7px;height:1.2px;background:#686868"></div><div style="left:906.62px;top:44px;width:.7px;height:1.2px;background:#686868"></div><div style="left:908.75px;top:39px;width:.7px;height:6.5px;background:#6c6c6c"></div><span class="t" style="left:909.95px;top:39.5px;font-size:4.3px;line-height:4.3px;color:#a8a8a8">1350</span><div style="left:910.88px;top:44px;width:.7px;height:1.2px;background:#686868"></div><div style="left:913.00px;top:44px;width:.7px;height:1.2px;background:#686868"></div><div style="left:915.12px;top:44px;width:.7px;height:1.2px;background:#686868"></div><div style="left:917.25px;top:44px;width:.7px;height:1.2px;background:#686868"></div><div style="left:919.38px;top:43px;width:.7px;height:2.5px;background:#666"></div><div style="left:921.50px;top:44px;width:.7px;height:1.2px;background:#686868"></div><div style="left:923.62px;top:44px;width:.7px;height:1.2px;background:#686868"></div><div style="left:925.75px;top:44px;width:.7px;height:1.2px;background:#686868"></div><div style="left:927.88px;top:44px;width:.7px;height:1.2px;background:#686868"></div><div style="left:930.00px;top:39px;width:.7px;height:6.5px;background:#6c6c6c"></div><span class="t" style="left:931.20px;top:39.5px;font-size:4.3px;line-height:4.3px;color:#a8a8a8">1400</span><div style="left:932.12px;top:44px;width:.7px;height:1.2px;background:#686868"></div><div style="left:934.25px;top:44px;width:.7px;height:1.2px;background:#686868"></div><div style="left:936.38px;top:44px;width:.7px;height:1.2px;background:#686868"></div><div style="left:938.50px;top:44px;width:.7px;height:1.2px;background:#686868"></div><div style="left:940.62px;top:43px;width:.7px;height:2.5px;background:#666"></div><div style="left:942.75px;top:44px;width:.7px;height:1.2px;background:#686868"></div><div style="left:944.88px;top:44px;width:.7px;height:1.2px;background:#686868"></div><div style="left:947.00px;top:44px;width:.7px;height:1.2px;background:#686868"></div><div style="left:949.12px;top:44px;width:.7px;height:1.2px;background:#686868"></div><div style="left:951.25px;top:39px;width:.7px;height:6.5px;background:#6c6c6c"></div><span class="t" style="left:952.45px;top:39.5px;font-size:4.3px;line-height:4.3px;color:#a8a8a8">1450</span><div style="left:0px;top:46.75px;width:6px;height:.6px;background:#5e5e5e"></div><div style="left:0px;top:48.25px;width:1.3px;height:9px;background:repeating-linear-gradient(180deg,#a8a8a8 0 2px,transparent 2px 3px);opacity:.4"></div><div style="left:4.3px;top:48.88px;width:1.2px;height:.7px;background:#686868"></div><div style="left:4.3px;top:51.00px;width:1.2px;height:.7px;background:#686868"></div><div style="left:4.3px;top:53.12px;width:1.2px;height:.7px;background:#686868"></div><div style="left:4.3px;top:55.25px;width:1.2px;height:.7px;background:#686868"></div><div style="left:3.5px;top:57.38px;width:2.5px;height:.7px;background:#686868"></div><div style="left:4.3px;top:59.50px;width:1.2px;height:.7px;background:#686868"></div><div style="left:4.3px;top:61.62px;width:1.2px;height:.7px;background:#686868"></div><div style="left:4.3px;top:63.75px;width:1.2px;height:.7px;background:#686868"></div><div style="left:4.3px;top:65.88px;width:1.2px;height:.7px;background:#686868"></div><div style="left:0px;top:68.00px;width:6px;height:.6px;background:#5e5e5e"></div><div style="left:0px;top:69.50px;width:1.3px;height:9px;background:repeating-linear-gradient(180deg,#a8a8a8 0 2px,transparent 2px 3px);opacity:.4"></div><div style="left:4.3px;top:70.12px;width:1.2px;height:.7px;background:#686868"></div><div style="left:4.3px;top:72.25px;width:1.2px;height:.7px;background:#686868"></div><div style="left:4.3px;top:74.38px;width:1.2px;height:.7px;background:#686868"></div><div style="left:4.3px;top:76.50px;width:1.2px;height:.7px;background:#686868"></div><div style="left:3.5px;top:78.62px;width:2.5px;height:.7px;background:#686868"></div><div style="left:4.3px;top:80.75px;width:1.2px;height:.7px;background:#686868"></div><div style="left:4.3px;top:82.88px;width:1.2px;height:.7px;background:#686868"></div><div style="left:4.3px;top:85.00px;width:1.2px;height:.7px;background:#686868"></div><div style="left:4.3px;top:87.12px;width:1.2px;height:.7px;background:#686868"></div><div style="left:0px;top:89.25px;width:6px;height:.6px;background:#5e5e5e"></div><div style="left:0px;top:90.75px;width:1.3px;height:9px;background:repeating-linear-gradient(180deg,#a8a8a8 0 2px,transparent 2px 3px);opacity:.4"></div><div style="left:4.3px;top:91.38px;width:1.2px;height:.7px;background:#686868"></div><div style="left:4.3px;top:93.50px;width:1.2px;height:.7px;background:#686868"></div><div style="left:4.3px;top:95.62px;width:1.2px;height:.7px;background:#686868"></div><div style="left:4.3px;top:97.75px;width:1.2px;height:.7px;background:#686868"></div><div style="left:3.5px;top:99.88px;width:2.5px;height:.7px;background:#686868"></div><div style="left:4.3px;top:102.00px;width:1.2px;height:.7px;background:#686868"></div><div style="left:4.3px;top:104.12px;width:1.2px;height:.7px;background:#686868"></div><div style="left:4.3px;top:106.25px;width:1.2px;height:.7px;background:#686868"></div><div style="left:4.3px;top:108.38px;width:1.2px;height:.7px;background:#686868"></div><div style="left:0px;top:110.50px;width:6px;height:.6px;background:#5e5e5e"></div><div style="left:0px;top:112.00px;width:1.3px;height:9px;background:repeating-linear-gradient(180deg,#a8a8a8 0 2px,transparent 2px 3px);opacity:.4"></div><div style="left:4.3px;top:112.62px;width:1.2px;height:.7px;background:#686868"></div><div style="left:4.3px;top:114.75px;width:1.2px;height:.7px;background:#686868"></div><div style="left:4.3px;top:116.88px;width:1.2px;height:.7px;background:#686868"></div><div style="left:4.3px;top:119.00px;width:1.2px;height:.7px;background:#686868"></div><div style="left:3.5px;top:121.12px;width:2.5px;height:.7px;background:#686868"></div><div style="left:4.3px;top:123.25px;width:1.2px;height:.7px;background:#686868"></div><div style="left:4.3px;top:125.38px;width:1.2px;height:.7px;background:#686868"></div><div style="left:4.3px;top:127.50px;width:1.2px;height:.7px;background:#686868"></div><div style="left:4.3px;top:129.62px;width:1.2px;height:.7px;background:#686868"></div><div style="left:0px;top:131.75px;width:6px;height:.6px;background:#5e5e5e"></div><div style="left:0px;top:133.25px;width:1.3px;height:9px;background:repeating-linear-gradient(180deg,#a8a8a8 0 2px,transparent 2px 3px);opacity:.4"></div><div style="left:4.3px;top:133.88px;width:1.2px;height:.7px;background:#686868"></div><div style="left:4.3px;top:136.00px;width:1.2px;height:.7px;background:#686868"></div><div style="left:4.3px;top:138.12px;width:1.2px;height:.7px;background:#686868"></div><div style="left:4.3px;top:140.25px;width:1.2px;height:.7px;background:#686868"></div><div style="left:3.5px;top:142.38px;width:2.5px;height:.7px;background:#686868"></div><div style="left:4.3px;top:144.50px;width:1.2px;height:.7px;background:#686868"></div><div style="left:4.3px;top:146.62px;width:1.2px;height:.7px;background:#686868"></div><div style="left:4.3px;top:148.75px;width:1.2px;height:.7px;background:#686868"></div><div style="left:4.3px;top:150.88px;width:1.2px;height:.7px;background:#686868"></div><div style="left:0px;top:153.00px;width:6px;height:.6px;background:#5e5e5e"></div><div style="left:0px;top:154.50px;width:1.3px;height:9px;background:repeating-linear-gradient(180deg,#a8a8a8 0 2px,transparent 2px 3px);opacity:.4"></div><div style="left:4.3px;top:155.12px;width:1.2px;height:.7px;background:#686868"></div><div style="left:4.3px;top:157.25px;width:1.2px;height:.7px;background:#686868"></div><div style="left:4.3px;top:159.38px;width:1.2px;height:.7px;background:#686868"></div><div style="left:4.3px;top:161.50px;width:1.2px;height:.7px;background:#686868"></div><div style="left:3.5px;top:163.62px;width:2.5px;height:.7px;background:#686868"></div><div style="left:4.3px;top:165.75px;width:1.2px;height:.7px;background:#686868"></div><div style="left:4.3px;top:167.88px;width:1.2px;height:.7px;background:#686868"></div><div style="left:4.3px;top:170.00px;width:1.2px;height:.7px;background:#686868"></div><div style="left:4.3px;top:172.12px;width:1.2px;height:.7px;background:#686868"></div><div style="left:0px;top:174.25px;width:6px;height:.6px;background:#5e5e5e"></div><div style="left:0px;top:175.75px;width:1.3px;height:9px;background:repeating-linear-gradient(180deg,#a8a8a8 0 2px,transparent 2px 3px);opacity:.4"></div><div style="left:4.3px;top:176.38px;width:1.2px;height:.7px;background:#686868"></div><div style="left:4.3px;top:178.50px;width:1.2px;height:.7px;background:#686868"></div><div style="left:4.3px;top:180.62px;width:1.2px;height:.7px;background:#686868"></div><div style="left:4.3px;top:182.75px;width:1.2px;height:.7px;background:#686868"></div><div style="left:3.5px;top:184.88px;width:2.5px;height:.7px;background:#686868"></div><div style="left:4.3px;top:187.00px;width:1.2px;height:.7px;background:#686868"></div><div style="left:4.3px;top:189.12px;width:1.2px;height:.7px;background:#686868"></div><div style="left:4.3px;top:191.25px;width:1.2px;height:.7px;background:#686868"></div><div style="left:4.3px;top:193.38px;width:1.2px;height:.7px;background:#686868"></div><div style="left:0px;top:195.50px;width:6px;height:.6px;background:#5e5e5e"></div><div style="left:0px;top:197.00px;width:1.3px;height:9px;background:repeating-linear-gradient(180deg,#a8a8a8 0 2px,transparent 2px 3px);opacity:.4"></div><div style="left:4.3px;top:197.62px;width:1.2px;height:.7px;background:#686868"></div><div style="left:4.3px;top:199.75px;width:1.2px;height:.7px;background:#686868"></div><div style="left:4.3px;top:201.88px;width:1.2px;height:.7px;background:#686868"></div><div style="left:4.3px;top:204.00px;width:1.2px;height:.7px;background:#686868"></div><div style="left:3.5px;top:206.12px;width:2.5px;height:.7px;background:#686868"></div><div style="left:4.3px;top:208.25px;width:1.2px;height:.7px;background:#686868"></div><div style="left:4.3px;top:210.38px;width:1.2px;height:.7px;background:#686868"></div><div style="left:4.3px;top:212.50px;width:1.2px;height:.7px;background:#686868"></div><div style="left:4.3px;top:214.62px;width:1.2px;height:.7px;background:#686868"></div><div style="left:0px;top:216.75px;width:6px;height:.6px;background:#5e5e5e"></div><div style="left:0px;top:218.25px;width:1.3px;height:9px;background:repeating-linear-gradient(180deg,#a8a8a8 0 2px,transparent 2px 3px);opacity:.4"></div><div style="left:4.3px;top:218.88px;width:1.2px;height:.7px;background:#686868"></div><div style="left:4.3px;top:221.00px;width:1.2px;height:.7px;background:#686868"></div><div style="left:4.3px;top:223.12px;width:1.2px;height:.7px;background:#686868"></div><div style="left:4.3px;top:225.25px;width:1.2px;height:.7px;background:#686868"></div><div style="left:3.5px;top:227.38px;width:2.5px;height:.7px;background:#686868"></div><div style="left:4.3px;top:229.50px;width:1.2px;height:.7px;background:#686868"></div><div style="left:4.3px;top:231.62px;width:1.2px;height:.7px;background:#686868"></div><div style="left:4.3px;top:233.75px;width:1.2px;height:.7px;background:#686868"></div><div style="left:4.3px;top:235.88px;width:1.2px;height:.7px;background:#686868"></div><div style="left:0px;top:238.00px;width:6px;height:.6px;background:#5e5e5e"></div><div style="left:0px;top:239.50px;width:1.3px;height:9px;background:repeating-linear-gradient(180deg,#a8a8a8 0 2px,transparent 2px 3px);opacity:.4"></div><div style="left:4.3px;top:240.12px;width:1.2px;height:.7px;background:#686868"></div><div style="left:4.3px;top:242.25px;width:1.2px;height:.7px;background:#686868"></div><div style="left:4.3px;top:244.38px;width:1.2px;height:.7px;background:#686868"></div><div style="left:4.3px;top:246.50px;width:1.2px;height:.7px;background:#686868"></div><div style="left:3.5px;top:248.62px;width:2.5px;height:.7px;background:#686868"></div><div style="left:4.3px;top:250.75px;width:1.2px;height:.7px;background:#686868"></div><div style="left:4.3px;top:252.88px;width:1.2px;height:.7px;background:#686868"></div><div style="left:4.3px;top:255.00px;width:1.2px;height:.7px;background:#686868"></div><div style="left:4.3px;top:257.12px;width:1.2px;height:.7px;background:#686868"></div><div style="left:0px;top:259.25px;width:6px;height:.6px;background:#5e5e5e"></div><div style="left:0px;top:260.75px;width:1.3px;height:9px;background:repeating-linear-gradient(180deg,#a8a8a8 0 2px,transparent 2px 3px);opacity:.4"></div><div style="left:4.3px;top:261.38px;width:1.2px;height:.7px;background:#686868"></div><div style="left:4.3px;top:263.50px;width:1.2px;height:.7px;background:#686868"></div><div style="left:4.3px;top:265.62px;width:1.2px;height:.7px;background:#686868"></div><div style="left:4.3px;top:267.75px;width:1.2px;height:.7px;background:#686868"></div><div style="left:3.5px;top:269.88px;width:2.5px;height:.7px;background:#686868"></div><div style="left:4.3px;top:272.00px;width:1.2px;height:.7px;background:#686868"></div><div style="left:4.3px;top:274.12px;width:1.2px;height:.7px;background:#686868"></div><div style="left:4.3px;top:276.25px;width:1.2px;height:.7px;background:#686868"></div><div style="left:4.3px;top:278.38px;width:1.2px;height:.7px;background:#686868"></div><div style="left:0px;top:280.50px;width:6px;height:.6px;background:#5e5e5e"></div><div style="left:0px;top:282.00px;width:1.3px;height:9px;background:repeating-linear-gradient(180deg,#a8a8a8 0 2px,transparent 2px 3px);opacity:.4"></div><div style="left:4.3px;top:282.62px;width:1.2px;height:.7px;background:#686868"></div><div style="left:4.3px;top:284.75px;width:1.2px;height:.7px;background:#686868"></div><div style="left:4.3px;top:286.88px;width:1.2px;height:.7px;background:#686868"></div><div style="left:4.3px;top:289.00px;width:1.2px;height:.7px;background:#686868"></div><div style="left:3.5px;top:291.12px;width:2.5px;height:.7px;background:#686868"></div><div style="left:4.3px;top:293.25px;width:1.2px;height:.7px;background:#686868"></div><div style="left:4.3px;top:295.38px;width:1.2px;height:.7px;background:#686868"></div><div style="left:4.3px;top:297.50px;width:1.2px;height:.7px;background:#686868"></div><div style="left:4.3px;top:299.62px;width:1.2px;height:.7px;background:#686868"></div><div style="left:0px;top:301.75px;width:6px;height:.6px;background:#5e5e5e"></div><div style="left:0px;top:303.25px;width:1.3px;height:9px;background:repeating-linear-gradient(180deg,#a8a8a8 0 2px,transparent 2px 3px);opacity:.4"></div><div style="left:4.3px;top:303.88px;width:1.2px;height:.7px;background:#686868"></div><div style="left:4.3px;top:306.00px;width:1.2px;height:.7px;background:#686868"></div><div style="left:4.3px;top:308.12px;width:1.2px;height:.7px;background:#686868"></div><div style="left:4.3px;top:310.25px;width:1.2px;height:.7px;background:#686868"></div><div style="left:3.5px;top:312.38px;width:2.5px;height:.7px;background:#686868"></div><div style="left:4.3px;top:314.50px;width:1.2px;height:.7px;background:#686868"></div><div style="left:4.3px;top:316.62px;width:1.2px;height:.7px;background:#686868"></div><div style="left:4.3px;top:318.75px;width:1.2px;height:.7px;background:#686868"></div><div style="left:4.3px;top:320.88px;width:1.2px;height:.7px;background:#686868"></div><div style="left:0px;top:323.00px;width:6px;height:.6px;background:#5e5e5e"></div><div style="left:0px;top:324.50px;width:1.3px;height:9px;background:repeating-linear-gradient(180deg,#a8a8a8 0 2px,transparent 2px 3px);opacity:.4"></div><div style="left:4.3px;top:325.12px;width:1.2px;height:.7px;background:#686868"></div><div style="left:4.3px;top:327.25px;width:1.2px;height:.7px;background:#686868"></div><div style="left:4.3px;top:329.38px;width:1.2px;height:.7px;background:#686868"></div><div style="left:4.3px;top:331.50px;width:1.2px;height:.7px;background:#686868"></div><div style="left:3.5px;top:333.62px;width:2.5px;height:.7px;background:#686868"></div><div style="left:4.3px;top:335.75px;width:1.2px;height:.7px;background:#686868"></div><div style="left:4.3px;top:337.88px;width:1.2px;height:.7px;background:#686868"></div><div style="left:4.3px;top:340.00px;width:1.2px;height:.7px;background:#686868"></div><div style="left:4.3px;top:342.12px;width:1.2px;height:.7px;background:#686868"></div><div style="left:0px;top:344.25px;width:6px;height:.6px;background:#5e5e5e"></div><div style="left:0px;top:345.75px;width:1.3px;height:9px;background:repeating-linear-gradient(180deg,#a8a8a8 0 2px,transparent 2px 3px);opacity:.4"></div><div style="left:4.3px;top:346.38px;width:1.2px;height:.7px;background:#686868"></div><div style="left:4.3px;top:348.50px;width:1.2px;height:.7px;background:#686868"></div><div style="left:4.3px;top:350.62px;width:1.2px;height:.7px;background:#686868"></div><div style="left:4.3px;top:352.75px;width:1.2px;height:.7px;background:#686868"></div><div style="left:3.5px;top:354.88px;width:2.5px;height:.7px;background:#686868"></div><div style="left:4.3px;top:357.00px;width:1.2px;height:.7px;background:#686868"></div><div style="left:4.3px;top:359.12px;width:1.2px;height:.7px;background:#686868"></div><div style="left:4.3px;top:361.25px;width:1.2px;height:.7px;background:#686868"></div><div style="left:4.3px;top:363.38px;width:1.2px;height:.7px;background:#686868"></div><div style="left:0px;top:365.50px;width:6px;height:.6px;background:#5e5e5e"></div><div style="left:0px;top:367.00px;width:1.3px;height:9px;background:repeating-linear-gradient(180deg,#a8a8a8 0 2px,transparent 2px 3px);opacity:.4"></div><div style="left:4.3px;top:367.62px;width:1.2px;height:.7px;background:#686868"></div><div style="left:4.3px;top:369.75px;width:1.2px;height:.7px;background:#686868"></div><div style="left:4.3px;top:371.88px;width:1.2px;height:.7px;background:#686868"></div><div style="left:4.3px;top:374.00px;width:1.2px;height:.7px;background:#686868"></div><div style="left:3.5px;top:376.12px;width:2.5px;height:.7px;background:#686868"></div><div style="left:4.3px;top:378.25px;width:1.2px;height:.7px;background:#686868"></div><div style="left:4.3px;top:380.38px;width:1.2px;height:.7px;background:#686868"></div><div style="left:4.3px;top:382.50px;width:1.2px;height:.7px;background:#686868"></div><div style="left:4.3px;top:384.62px;width:1.2px;height:.7px;background:#686868"></div><div style="left:0px;top:386.75px;width:6px;height:.6px;background:#5e5e5e"></div><div style="left:0px;top:388.25px;width:1.3px;height:9px;background:repeating-linear-gradient(180deg,#a8a8a8 0 2px,transparent 2px 3px);opacity:.4"></div><div style="left:4.3px;top:388.88px;width:1.2px;height:.7px;background:#686868"></div><div style="left:4.3px;top:391.00px;width:1.2px;height:.7px;background:#686868"></div><div style="left:4.3px;top:393.12px;width:1.2px;height:.7px;background:#686868"></div><div style="left:4.3px;top:395.25px;width:1.2px;height:.7px;background:#686868"></div><div style="left:3.5px;top:397.38px;width:2.5px;height:.7px;background:#686868"></div><div style="left:4.3px;top:399.50px;width:1.2px;height:.7px;background:#686868"></div><div style="left:4.3px;top:401.62px;width:1.2px;height:.7px;background:#686868"></div><div style="left:4.3px;top:403.75px;width:1.2px;height:.7px;background:#686868"></div><div style="left:4.3px;top:405.88px;width:1.2px;height:.7px;background:#686868"></div><div style="left:0px;top:408.00px;width:6px;height:.6px;background:#5e5e5e"></div><div style="left:0px;top:409.50px;width:1.3px;height:9px;background:repeating-linear-gradient(180deg,#a8a8a8 0 2px,transparent 2px 3px);opacity:.4"></div><div style="left:4.3px;top:410.12px;width:1.2px;height:.7px;background:#686868"></div><div style="left:4.3px;top:412.25px;width:1.2px;height:.7px;background:#686868"></div><div style="left:4.3px;top:414.38px;width:1.2px;height:.7px;background:#686868"></div><div style="left:4.3px;top:416.50px;width:1.2px;height:.7px;background:#686868"></div><div style="left:3.5px;top:418.62px;width:2.5px;height:.7px;background:#686868"></div><div style="left:4.3px;top:420.75px;width:1.2px;height:.7px;background:#686868"></div><div style="left:4.3px;top:422.88px;width:1.2px;height:.7px;background:#686868"></div><div style="left:4.3px;top:425.00px;width:1.2px;height:.7px;background:#686868"></div><div style="left:4.3px;top:427.12px;width:1.2px;height:.7px;background:#686868"></div><div style="left:0px;top:429.25px;width:6px;height:.6px;background:#5e5e5e"></div><div style="left:0px;top:430.75px;width:1.3px;height:9px;background:repeating-linear-gradient(180deg,#a8a8a8 0 2px,transparent 2px 3px);opacity:.4"></div><div style="left:4.3px;top:431.38px;width:1.2px;height:.7px;background:#686868"></div><div style="left:4.3px;top:433.50px;width:1.2px;height:.7px;background:#686868"></div><div style="left:4.3px;top:435.62px;width:1.2px;height:.7px;background:#686868"></div><div style="left:4.3px;top:437.75px;width:1.2px;height:.7px;background:#686868"></div><div style="left:3.5px;top:439.88px;width:2.5px;height:.7px;background:#686868"></div><div style="left:4.3px;top:442.00px;width:1.2px;height:.7px;background:#686868"></div><div style="left:4.3px;top:444.12px;width:1.2px;height:.7px;background:#686868"></div><div style="left:4.3px;top:446.25px;width:1.2px;height:.7px;background:#686868"></div><div style="left:4.3px;top:448.38px;width:1.2px;height:.7px;background:#686868"></div><div style="left:0px;top:450.50px;width:6px;height:.6px;background:#5e5e5e"></div><div style="left:0px;top:452.00px;width:1.3px;height:9px;background:repeating-linear-gradient(180deg,#a8a8a8 0 2px,transparent 2px 3px);opacity:.4"></div><div style="left:4.3px;top:452.62px;width:1.2px;height:.7px;background:#686868"></div><div style="left:4.3px;top:454.75px;width:1.2px;height:.7px;background:#686868"></div><div style="left:4.3px;top:456.88px;width:1.2px;height:.7px;background:#686868"></div><div style="left:4.3px;top:459.00px;width:1.2px;height:.7px;background:#686868"></div><div style="left:3.5px;top:461.12px;width:2.5px;height:.7px;background:#686868"></div><div style="left:4.3px;top:463.25px;width:1.2px;height:.7px;background:#686868"></div><div style="left:4.3px;top:465.38px;width:1.2px;height:.7px;background:#686868"></div><div style="left:4.3px;top:467.50px;width:1.2px;height:.7px;background:#686868"></div><div style="left:4.3px;top:469.62px;width:1.2px;height:.7px;background:#686868"></div><div style="left:0px;top:471.75px;width:6px;height:.6px;background:#5e5e5e"></div><div style="left:0px;top:473.25px;width:1.3px;height:9px;background:repeating-linear-gradient(180deg,#a8a8a8 0 2px,transparent 2px 3px);opacity:.4"></div><div style="left:4.3px;top:473.88px;width:1.2px;height:.7px;background:#686868"></div><div style="left:4.3px;top:476.00px;width:1.2px;height:.7px;background:#686868"></div><div style="left:4.3px;top:478.12px;width:1.2px;height:.7px;background:#686868"></div><div style="left:4.3px;top:480.25px;width:1.2px;height:.7px;background:#686868"></div><div style="left:3.5px;top:482.38px;width:2.5px;height:.7px;background:#686868"></div><div style="left:4.3px;top:484.50px;width:1.2px;height:.7px;background:#686868"></div><div style="left:4.3px;top:486.62px;width:1.2px;height:.7px;background:#686868"></div><div style="left:4.3px;top:488.75px;width:1.2px;height:.7px;background:#686868"></div><div style="left:4.3px;top:490.88px;width:1.2px;height:.7px;background:#686868"></div><div style="left:0px;top:493.00px;width:6px;height:.6px;background:#5e5e5e"></div><div style="left:0px;top:494.50px;width:1.3px;height:9px;background:repeating-linear-gradient(180deg,#a8a8a8 0 2px,transparent 2px 3px);opacity:.4"></div><div style="left:4.3px;top:495.12px;width:1.2px;height:.7px;background:#686868"></div><div style="left:4.3px;top:497.25px;width:1.2px;height:.7px;background:#686868"></div><div style="left:4.3px;top:499.38px;width:1.2px;height:.7px;background:#686868"></div><div style="left:4.3px;top:501.50px;width:1.2px;height:.7px;background:#686868"></div><div style="left:3.5px;top:503.62px;width:2.5px;height:.7px;background:#686868"></div><div style="left:4.3px;top:505.75px;width:1.2px;height:.7px;background:#686868"></div><div style="left:4.3px;top:507.88px;width:1.2px;height:.7px;background:#686868"></div><div style="left:4.3px;top:510.00px;width:1.2px;height:.7px;background:#686868"></div><div style="left:4.3px;top:512.12px;width:1.2px;height:.7px;background:#686868"></div><div style="left:0px;top:514.25px;width:6px;height:.6px;background:#5e5e5e"></div><div style="left:0px;top:515.75px;width:1.3px;height:9px;background:repeating-linear-gradient(180deg,#a8a8a8 0 2px,transparent 2px 3px);opacity:.4"></div><div style="left:4.3px;top:516.38px;width:1.2px;height:.7px;background:#686868"></div><div style="left:4.3px;top:518.50px;width:1.2px;height:.7px;background:#686868"></div><div style="left:4.3px;top:520.62px;width:1.2px;height:.7px;background:#686868"></div><div style="left:4.3px;top:522.75px;width:1.2px;height:.7px;background:#686868"></div><div style="left:3.5px;top:524.88px;width:2.5px;height:.7px;background:#686868"></div><div style="left:4.3px;top:527.00px;width:1.2px;height:.7px;background:#686868"></div><div style="left:4.3px;top:529.12px;width:1.2px;height:.7px;background:#686868"></div><div style="left:4.3px;top:531.25px;width:1.2px;height:.7px;background:#686868"></div><div style="left:4.3px;top:533.38px;width:1.2px;height:.7px;background:#686868"></div><div style="left:0px;top:535.50px;width:6px;height:.6px;background:#5e5e5e"></div><div style="left:0px;top:537.00px;width:1.3px;height:9px;background:repeating-linear-gradient(180deg,#a8a8a8 0 2px,transparent 2px 3px);opacity:.4"></div><div style="left:4.3px;top:537.62px;width:1.2px;height:.7px;background:#686868"></div><div style="left:4.3px;top:539.75px;width:1.2px;height:.7px;background:#686868"></div><div style="left:4.3px;top:541.88px;width:1.2px;height:.7px;background:#686868"></div><div style="left:4.3px;top:544.00px;width:1.2px;height:.7px;background:#686868"></div><div style="left:3.5px;top:546.12px;width:2.5px;height:.7px;background:#686868"></div><div style="left:4.3px;top:548.25px;width:1.2px;height:.7px;background:#686868"></div><div style="left:4.3px;top:550.38px;width:1.2px;height:.7px;background:#686868"></div><div style="left:4.3px;top:552.50px;width:1.2px;height:.7px;background:#686868"></div><div style="left:4.3px;top:554.62px;width:1.2px;height:.7px;background:#686868"></div><div style="left:0px;top:556.75px;width:6px;height:.6px;background:#5e5e5e"></div><div style="left:0px;top:558.25px;width:1.3px;height:9px;background:repeating-linear-gradient(180deg,#a8a8a8 0 2px,transparent 2px 3px);opacity:.4"></div><div style="left:4.3px;top:558.88px;width:1.2px;height:.7px;background:#686868"></div><div style="left:4.3px;top:561.00px;width:1.2px;height:.7px;background:#686868"></div><div style="left:4.3px;top:563.12px;width:1.2px;height:.7px;background:#686868"></div><div style="left:4.3px;top:565.25px;width:1.2px;height:.7px;background:#686868"></div><div style="left:3.5px;top:567.38px;width:2.5px;height:.7px;background:#686868"></div><div style="left:4.3px;top:569.50px;width:1.2px;height:.7px;background:#686868"></div><div style="left:4.3px;top:571.62px;width:1.2px;height:.7px;background:#686868"></div><div style="left:4.3px;top:573.75px;width:1.2px;height:.7px;background:#686868"></div><div style="left:4.3px;top:575.88px;width:1.2px;height:.7px;background:#686868"></div><div style="left:0px;top:578.00px;width:6px;height:.6px;background:#5e5e5e"></div><div style="left:0px;top:579.50px;width:1.3px;height:9px;background:repeating-linear-gradient(180deg,#a8a8a8 0 2px,transparent 2px 3px);opacity:.4"></div><div style="left:4.3px;top:580.12px;width:1.2px;height:.7px;background:#686868"></div><div style="left:4.3px;top:582.25px;width:1.2px;height:.7px;background:#686868"></div><div style="left:4.3px;top:584.38px;width:1.2px;height:.7px;background:#686868"></div><div style="left:4.3px;top:586.50px;width:1.2px;height:.7px;background:#686868"></div><div style="left:6px;top:46px;width:947px;height:541px;background:#282828;"></div><div style="left:24px;top:113.5px;width:16px;height:23px;background:#565656;box-shadow:0 0 2px #1a1a1a"></div><div style="left:24px;top:113.5px;width:16px;height:5px;background:#424242;"></div><div style="left:27px;top:115.5px;width:4px;height:1px;background:#bdbdbd;"></div><svg style="left:35px;top:114.3px" width="3.5" height="3.5" viewBox="0 0 3.5 3.5" fill="none" stroke="#c8c8c8" stroke-width="0.8"><path d="M0.3 0.3L3.2 3.2M3.2 0.3L0.3 3.2"/></svg><div style="left:27px;top:121px;width:10px;height:0.5px;background:#6a6a6a;"></div><svg style="left:27px;top:122px" width="11" height="11" viewBox="0 0 11 11" fill="none" stroke="#d8d8d8" stroke-width="1"><path d="M1.6 2.5V6.3M3.3 2.5V6.3" stroke-width=".9"/><path d="M10 3.5L5.2 8" stroke-width="1.5"/><ellipse cx="4.3" cy="9" rx="2" ry="1.4" fill="#e6e6e6" stroke="none" transform="rotate(-40 4.3 9)"/></svg><div style="left:335px;top:110.5px;width:296px;height:425px;background:#f5eec5;box-shadow:0 0 1.5px 0.5px #141414"></div><svg style="left:440px;top:210px" width="90" height="240" viewBox="0 0 90 240">
<defs>
<linearGradient id="body" x1="0" x2="1" y1="0" y2="0">
<stop offset="0" stop-color="#e6c21c"/>
<stop offset="0.08" stop-color="#f4da4c"/>
<stop offset="0.3" stop-color="#f5dc44"/>
<stop offset="0.65" stop-color="#f3d634"/>
<stop offset="0.9" stop-color="#efcd2a"/>
<stop offset="1" stop-color="#dfb81c"/>
</linearGradient>
<radialGradient id="glow" cx="0.35" cy="0.22" r="0.55">
<stop offset="0" stop-color="#fbeea0" stop-opacity=".45"/>
<stop offset="1" stop-color="#fbeea0" stop-opacity="0"/>
</radialGradient>
<linearGradient id="cap" x1="0" x2="1" y1="0" y2="0">
<stop offset="0" stop-color="#7c7c7c"/>
<stop offset="0.06" stop-color="#d6d6d6"/>
<stop offset="0.13" stop-color="#a2a2a2"/>
<stop offset="0.2" stop-color="#fdfdfd"/>
<stop offset="0.3" stop-color="#bdbdbd"/>
<stop offset="0.4" stop-color="#ffffff"/>
<stop offset="0.49" stop-color="#7e7e7e"/>
<stop offset="0.58" stop-color="#e2e2e2"/>
<stop offset="0.68" stop-color="#f7f7f7"/>
<stop offset="0.76" stop-color="#a9a9a9"/>
<stop offset="0.85" stop-color="#e9e9e9"/>
<stop offset="0.93" stop-color="#8c8c8c"/>
<stop offset="1" stop-color="#7a7a7a"/>
</linearGradient>
<linearGradient id="bulb" x1="0" x2="1" y1="0" y2="0">
<stop offset="0" stop-color="#e8e8e8"/>
<stop offset="0.4" stop-color="#ffffff"/>
<stop offset="1" stop-color="#e6e6e6"/>
</linearGradient>
<linearGradient id="lab" x1="0" x2="1" y1="0" y2="0">
<stop offset="0" stop-color="#f0f0f0"/>
<stop offset="0.45" stop-color="#ffffff"/>
<stop offset="1" stop-color="#e4e4e4"/>
</linearGradient>
<linearGradient id="hl" x1="0" x2="0" y1="0" y2="1">
<stop offset="0" stop-color="#fffbe0" stop-opacity=".5"/>
<stop offset="0.2" stop-color="#fffdf2" stop-opacity=".85"/>
<stop offset="1" stop-color="#fffdf0" stop-opacity=".95"/>
</linearGradient>
</defs>
<path d="M31.3 48.8 V21 A11 11 0 0 1 53.4 21 V48.8 Z" fill="url(#bulb)"/>
<path d="M29 49.5 L31 43.5 H53.5 L55.5 49.5 Z" fill="#f2f2f2"/>
<path d="M22 78 H63.5 V84 L62 85.5 C64 89 76 97 76 115 V221 Q76 228 70 228 H15.5 Q9.5 228 9.5 221 V115 C9.5 97 22 89 24 85.5 L22 84 Z" fill="url(#body)"/><path d="M22 78 H63.5 V84 L62 85.5 C64 89 76 97 76 115 V221 Q76 228 70 228 H15.5 Q9.5 228 9.5 221 V115 C9.5 97 22 89 24 85.5 L22 84 Z" fill="url(#glow)"/>
<path d="M22 79.5 H63.5 V84 H22 Z" fill="#ecc62a" opacity=".75"/><path d="M22 80 H63.5" stroke="#f8e070" stroke-width=".8"/><rect x="27.5" y="85" width="3.5" height="3" rx="1" fill="#fff8d0" opacity=".8"/>
<path d="M30 98 C34 92 45 93 48 99 C56 100 64 106 65 118 C66 128 65 135 64 140" stroke="#e8c428" stroke-width=".8" fill="none" opacity=".7"/>
<path d="M9.5 215 H76 V221 Q76 228 70 228 H15.5 Q9.5 228 9.5 221 Z" fill="#e7b91c" opacity=".85"/>
<path d="M10 214.5 Q43 212 76 214.5" stroke="#d9a914" stroke-width=".7" fill="none" opacity=".6"/>
<rect x="10.5" y="112" width="5" height="103" fill="#faea8a" opacity=".45"/>
<path d="M21.5 113 Q21.5 109 25.5 109 H30.5 V224.5 H21.5 Z" fill="url(#hl)"/>
<rect x="20.6" y="49.5" width="42.7" height="29.8" fill="url(#cap)"/>
<rect x="20.6" y="75.2" width="42.7" height=".9" fill="#5e5e5e" opacity=".6"/><rect x="20.6" y="77.3" width="42.7" height="1" fill="#f4f4f4" opacity=".6"/>
<rect x="20.6" y="49.5" width="42.7" height="1.2" fill="#e0e0e0"/>
<rect x="15.3" y="135.3" width="55" height="63.5" fill="url(#lab)"/>
<text x="45.5" y="151.5" text-anchor="middle" font-family="Liberation Sans" font-size="5.8" letter-spacing="5.3" fill="#333" stroke="#333" stroke-width=".15">MOIST</text>
<text x="43.3" y="160.4" text-anchor="middle" font-family="Liberation Sans" font-size="2.9" letter-spacing="1.05" fill="#5e5e5e">MOISTURE SERUM</text>
<text x="43" y="193.4" text-anchor="middle" font-family="Liberation Sans" font-size="3.6" letter-spacing=".95" fill="#444" stroke="#444" stroke-width=".12">COMPANY</text>
<path d="M49.5 54 V62.5 L51.5 60.8 L53 64 L54.2 63.4 L52.8 60.3 L55.5 60.1 Z" fill="#111" stroke="#fff" stroke-width=".6"/>
<circle cx="55.6" cy="63" r="1.3" fill="none" stroke="#333" stroke-width=".6"/>
</svg><div style="left:953px;top:38px;width:8px;height:552px;background:#4a4a4a;"></div><div style="left:955px;top:41.5px;width:3.5px;height:0.8px;background:#b0b0b0;"></div><div style="left:954px;top:208px;width:5.3px;height:204px;background:#686868;border-radius:.5px"></div><svg style="left:955px;top:581.5px" width="4" height="3" viewBox="0 0 4 3" fill="none" stroke="#d6d6d6" stroke-width="1"><path d="M0 0H4L2 2.5Z" fill="#8a8a8a" stroke="none"/></svg><div style="left:0px;top:587px;width:953px;height:3px;background:#4f4f4f;"></div><div style="left:333px;top:587px;width:380px;height:3px;background:#666666;"></div><div style="left:0;top:587px;width:333px;height:3px;overflow:hidden"><span class="t" style="left:3.5px;top:1px;font-size:5.5px;line-height:5.5px;color:#bdbdbd;">100%</span><span class="t" style="left:35.5px;top:0.16px;font-size:7.15px;line-height:7.15px;letter-spacing:-1.15px;color:#d0d0d0;opacity:0.65">ЖЯ</span><span class="t" style="left:46px;top:1px;font-size:5.5px;line-height:5.5px;color:#bdbdbd;letter-spacing:-.1px">:2.38M/48.4M</span><svg style="left:92px;top:1.3px" width="3" height="3" viewBox="0 0 3 3" fill="none" stroke="#aaa" stroke-width="0.7"><path d="M.5 .3L2.2 1.5L.5 2.7"/></svg></div><div style="left:961px;top:26px;width:1px;height:564px;background:#404040;"></div><div style="left:962px;top:26px;width:16px;height:564px;background:#535353;"></div><div style="left:962px;top:26px;width:16px;height:5px;background:#474747;"></div><svg style="left:971px;top:27.3px" width="4" height="2.4" viewBox="0 0 4 2.4" fill="none" stroke="#a8a8a8" stroke-width="0.6"><path d="M2 0.2L0.3 1.2L2 2.2M3.8 0.2L2.1 1.2L3.8 2.2" /></svg><div style="left:964px;top:33px;width:11px;height:1px;background:#5e5e5e;opacity:.6"></div><div style="left:963px;top:39.5px;width:12px;height:8.5px;background:#3b3b3b;"></div><div style="left:977px;top:31px;width:1px;height:559px;background:#474747;"></div><svg style="left:963.5px;top:39.0px" width="11" height="9" viewBox="0 0 11 9" fill="none" stroke="#d6d6d6" stroke-width="1"><path d="M5.5 1V8M2 4.5H9M4.3 2.2L5.5 1L6.7 2.2M4.3 6.8L5.5 8L6.7 6.8M3.2 3.3L2 4.5L3.2 5.7M7.8 3.3L9 4.5L7.8 5.7"/></svg><div style="left:973.5px;top:46.0px;width:1.6px;height:1.6px;border-right:.6px solid #aaa;border-bottom:.6px solid #aaa"></div><svg style="left:963.5px;top:50.0px" width="11" height="9" viewBox="0 0 11 9" fill="none" stroke="#d6d6d6" stroke-width="1"><rect x="2" y="1.5" width="7" height="6" stroke-dasharray="1.2 1"/></svg><div style="left:973.5px;top:57.0px;width:1.6px;height:1.6px;border-right:.6px solid #aaa;border-bottom:.6px solid #aaa"></div><svg style="left:963.5px;top:60.9px" width="11" height="9" viewBox="0 0 11 9" fill="none" stroke="#d6d6d6" stroke-width="1"><ellipse cx="5.8" cy="3.8" rx="3.6" ry="2.6"/><path d="M3 5.8 Q2 8 3.5 8.5"/></svg><div style="left:973.5px;top:67.9px;width:1.6px;height:1.6px;border-right:.6px solid #aaa;border-bottom:.6px solid #aaa"></div><svg style="left:963.5px;top:71.5px" width="11" height="9" viewBox="0 0 11 9" fill="none" stroke="#d6d6d6" stroke-width="1"><path d="M2 8L7.5 2.5" stroke-width="1.5"/><path d="M7 0.5V2M9.5 3H8M8.5 1L9.5 0"/></svg><div style="left:973.5px;top:78.5px;width:1.6px;height:1.6px;border-right:.6px solid #aaa;border-bottom:.6px solid #aaa"></div><svg style="left:963.5px;top:82.5px" width="11" height="9" viewBox="0 0 11 9" fill="none" stroke="#d6d6d6" stroke-width="1.2"><path d="M3 0.5V7H9.5M1 2.5H7.5V9"/></svg><div style="left:973.5px;top:89.5px;width:1.6px;height:1.6px;border-right:.6px solid #aaa;border-bottom:.6px solid #aaa"></div><svg style="left:963.5px;top:94.1px" width="11" height="9" viewBox="0 0 11 9" fill="none" stroke="#d6d6d6" stroke-width="1"><path d="M2 8L6.5 3.5" stroke-width="1.5"/><path d="M6 2L8 0.8L9.5 2.3L8.3 4.3Z" fill="#d6d6d6"/></svg><div style="left:973.5px;top:101.1px;width:1.6px;height:1.6px;border-right:.6px solid #aaa;border-bottom:.6px solid #aaa"></div><svg style="left:963.5px;top:105.5px" width="11" height="9" viewBox="0 0 11 9" fill="none" stroke="#d6d6d6" stroke-width="1"><rect x="2" y="2" width="7" height="5.5" rx="1.5"/><path d="M3.5 3.5H7.5V6H3.5Z" fill="#9a9a9a" stroke="none"/></svg><div style="left:973.5px;top:112.5px;width:1.6px;height:1.6px;border-right:.6px solid #aaa;border-bottom:.6px solid #aaa"></div><svg style="left:963.5px;top:117.1px" width="11" height="9" viewBox="0 0 11 9" fill="none" stroke="#d6d6d6" stroke-width="1"><path d="M3 7L8.5 1" stroke-width="1.3"/><ellipse cx="2.5" cy="7.5" rx="1.5" ry="1" fill="#d6d6d6" stroke="none"/></svg><div style="left:973.5px;top:124.1px;width:1.6px;height:1.6px;border-right:.6px solid #aaa;border-bottom:.6px solid #aaa"></div><svg style="left:963.5px;top:127.5px" width="11" height="9" viewBox="0 0 11 9" fill="none" stroke="#d6d6d6" stroke-width="1"><circle cx="5.5" cy="2" r="1.3" fill="#d6d6d6"/><path d="M5.5 3V5"/><rect x="2.5" y="5" width="6" height="2" fill="#d6d6d6" stroke="none"/><path d="M2 8.5H9"/></svg><div style="left:973.5px;top:134.5px;width:1.6px;height:1.6px;border-right:.6px solid #aaa;border-bottom:.6px solid #aaa"></div><svg style="left:963.5px;top:138.0px" width="11" height="9" viewBox="0 0 11 9" fill="none" stroke="#d6d6d6" stroke-width="1"><path d="M3 7.5L8.5 1.5" stroke-width="1.3"/><path d="M1.5 3.5L3.5 2.5M2 6L3 4.5"/></svg><div style="left:973.5px;top:145.0px;width:1.6px;height:1.6px;border-right:.6px solid #aaa;border-bottom:.6px solid #aaa"></div><svg style="left:963.5px;top:150.0px" width="11" height="9" viewBox="0 0 11 9" fill="none" stroke="#d6d6d6" stroke-width="1"><path d="M2.5 6L6.5 2L8.5 4L5 7.5H3Z" fill="#d6d6d6"/><path d="M2 8.3H9"/></svg><div style="left:973.5px;top:157.0px;width:1.6px;height:1.6px;border-right:.6px solid #aaa;border-bottom:.6px solid #aaa"></div><div style="left:965px;top:161.5px;width:8px;height:6px;background:linear-gradient(90deg,#3a3a3a,#e0e0e0);border:.8px solid #cfcfcf"></div><div style="left:973.5px;top:167.5px;width:1.6px;height:1.6px;border-right:.6px solid #aaa;border-bottom:.6px solid #aaa"></div><svg style="left:963.5px;top:171.0px" width="11" height="9" viewBox="0 0 11 9" fill="none" stroke="#d6d6d6" stroke-width="1"><path d="M5.5 1L8 5.3A2.7 2.7 0 0 1 3 5.3Z" fill="#d6d6d6"/></svg><div style="left:973.5px;top:178.0px;width:1.6px;height:1.6px;border-right:.6px solid #aaa;border-bottom:.6px solid #aaa"></div><svg style="left:963.5px;top:182.5px" width="11" height="9" viewBox="0 0 11 9" fill="none" stroke="#d6d6d6" stroke-width="1"><circle cx="6.5" cy="3.3" r="2.4" fill="#5a5a5a"/><path d="M4.8 5L2 8"/></svg><div style="left:973.5px;top:189.5px;width:1.6px;height:1.6px;border-right:.6px solid #aaa;border-bottom:.6px solid #aaa"></div><svg style="left:963.5px;top:193.0px" width="11" height="9" viewBox="0 0 11 9" fill="none" stroke="#d6d6d6" stroke-width="1"><path d="M3 8L2 5.5L6 1.5L9 4.5L5 8.5Z"/><circle cx="5.5" cy="5" r=".8" fill="#d6d6d6"/></svg><div style="left:973.5px;top:200.0px;width:1.6px;height:1.6px;border-right:.6px solid #aaa;border-bottom:.6px solid #aaa"></div><svg style="left:963.5px;top:204.5px" width="11" height="9" viewBox="0 0 11 9" fill="none" stroke="#d6d6d6" stroke-width="1"><path d="M2 1.5H9M5.5 1.5V8.5M4 8.5H7" stroke-width="1.4"/></svg><div style="left:973.5px;top:211.5px;width:1.6px;height:1.6px;border-right:.6px solid #aaa;border-bottom:.6px solid #aaa"></div><svg style="left:963.5px;top:215.2px" width="11" height="9" viewBox="0 0 11 9" fill="none" stroke="#d6d6d6" stroke-width="1"><path d="M3.5 1V8.5L5.3 6.8L6.8 9L8 8.4L6.6 6.2H9Z" fill="#d6d6d6" stroke="none"/></svg><div style="left:973.5px;top:222.2px;width:1.6px;height:1.6px;border-right:.6px solid #aaa;border-bottom:.6px solid #aaa"></div><svg style="left:963.5px;top:227.0px" width="11" height="9" viewBox="0 0 11 9" fill="none" stroke="#d6d6d6" stroke-width="1"><rect x="2" y="1.5" width="7" height="6" rx="2"/></svg><div style="left:973.5px;top:234.0px;width:1.6px;height:1.6px;border-right:.6px solid #aaa;border-bottom:.6px solid #aaa"></div><svg style="left:963.5px;top:237.5px" width="11" height="9" viewBox="0 0 11 9" fill="none" stroke="#d6d6d6" stroke-width="1"><path d="M2.5 4.5L4.5 7.5H8L9 4V2.2M7.5 3.5V1.5M6 3.5V1M4.5 3.5V1.6" stroke-width="1.1"/><path d="M4 3.5H8.5V6.5L7.5 7.5H4.5Z" fill="#d6d6d6" stroke="none"/></svg><svg style="left:963.5px;top:248.5px" width="11" height="9" viewBox="0 0 11 9" fill="none" stroke="#d6d6d6" stroke-width="1"><circle cx="4.8" cy="3.8" r="2.7"/><path d="M6.7 5.8L9 8.2" stroke-width="1.3"/></svg><svg style="left:963.5px;top:260.0px" width="11" height="9" viewBox="0 0 11 9" fill="none" stroke="#d6d6d6" stroke-width="0.5"><circle cx="2.5" cy="4.5" r=".95" fill="#d6d6d6" stroke="none"/><circle cx="5.5" cy="4.5" r=".95" fill="#d6d6d6" stroke="none"/><circle cx="8.5" cy="4.5" r=".95" fill="#d6d6d6" stroke="none"/></svg><div style="left:973.5px;top:267.0px;width:1.6px;height:1.6px;border-right:.6px solid #aaa;border-bottom:.6px solid #aaa"></div><div style="left:965.5px;top:273.5px;width:2.5px;height:2.5px;background:#111;border:.5px solid #eee"></div><div style="left:964px;top:271.8px;width:2.5px;height:2.5px;background:#f0f0f0"></div><svg style="left:963.5px;top:269.5px" width="11" height="9" viewBox="0 0 11 9" fill="none" stroke="#d6d6d6" stroke-width="0.7"><path d="M7 1.5H9.3V4"/><path d="M8.5 3.5L9.3 4.5L10 3.5" /></svg><div style="left:967px;top:284px;width:8.2px;height:7px;background:#f6e7c1;border:.5px solid #dcdcdc"></div><div style="left:962.7px;top:279.5px;width:7.6px;height:7.5px;background:#f7efc2;border:.5px solid #e6e6e6"></div><svg style="left:963.5px;top:294.5px" width="11" height="9" viewBox="0 0 11 9" fill="none" stroke="#d6d6d6" stroke-width="0.8"><rect x="2" y="1.5" width="7.5" height="6"/><circle cx="5.7" cy="4.5" r="1.8"/></svg><svg style="left:963.5px;top:305.2px" width="11" height="9" viewBox="0 0 11 9" fill="none" stroke="#d6d6d6" stroke-width="0.8"><rect x="3.5" y="1" width="6" height="4.5"/><rect x="1.5" y="3" width="6" height="4.5" fill="#535353"/></svg><div style="left:973.5px;top:312.2px;width:1.6px;height:1.6px;border-right:.6px solid #aaa;border-bottom:.6px solid #aaa"></div><div style="left:978px;top:31px;width:102px;height:559px;background:#434343;"></div><div style="left:978px;top:26px;width:102px;height:5px;background:#434343;"></div><svg style="left:1077px;top:27px" width="3" height="3" viewBox="0 0 3 3" fill="none" stroke="#9a9a9a" stroke-width="0.5"><path d="M0.3 0.3L2.7 2.7M2.7 0.3L0.3 2.7"/></svg><div style="left:978px;top:31px;width:102px;height:12px;background:#434343;"></div><span class="t" style="left:982px;top:34.23px;font-size:6.50px;line-height:6.50px;letter-spacing:-0.09px;color:#d0d0d0;opacity:0.65">ФЫ</span><span class="t" style="left:996px;top:34.23px;font-size:6.50px;line-height:6.50px;letter-spacing:-0.59px;color:#d0d0d0;opacity:0.65">ЪЭ</span><span class="t" style="left:1010px;top:34.23px;font-size:6.50px;line-height:6.50px;letter-spacing:-0.59px;color:#d0d0d0;opacity:0.65">Б</span><div style="left:1006.5px;top:32px;width:0.8px;height:11px;background:#3a3a3a;"></div><div style="left:1019.5px;top:32px;width:0.8px;height:11px;background:#3a3a3a;"></div><span class="t" style="left:1024px;top:34.23px;font-size:6.50px;line-height:6.50px;letter-spacing:-0.59px;color:#d0d0d0;opacity:0.65">ЖЯ</span><div style="left:1035px;top:31px;width:17px;height:12px;background:#535353;"></div><span class="t" style="left:1038px;top:34.23px;font-size:6.50px;line-height:6.50px;letter-spacing:-0.09px;color:#d8d8d8;opacity:0.98">ФЫ</span><span class="t" style="left:1056px;top:34.23px;font-size:6.50px;line-height:6.50px;letter-spacing:-0.59px;color:#d0d0d0;opacity:0.59">ЪЭ</span><span class="t" style="left:1077px;top:34.23px;font-size:6.50px;line-height:6.50px;letter-spacing:-2.59px;color:#d0d0d0;opacity:0.59">Б</span><div style="left:978px;top:43px;width:102px;height:111.5px;background:#535353;"></div><div style="left:982px;top:48px;width:43px;height:7px;background:#454545;"></div><span class="t" style="left:983.5px;top:49.2px;font-size:5px;line-height:5px;color:#c8c8c8;">Segoe UI</span><div style="left:1026px;top:48px;width:6.5px;height:7px;background:#454545;"></div><svg style="left:1027.5px;top:50.5px" width="4" height="3" viewBox="0 0 4 3" fill="none" stroke="#9a9a9a" stroke-width="0.7"><path d="M0.5 0.5L2 2L3.5 0.5"/></svg><div style="left:1037px;top:48px;width:24.5px;height:7px;background:#454545;"></div><span class="t" style="left:1038.5px;top:49.2px;font-size:5px;line-height:5px;color:#c8c8c8;">Semib...</span><div style="left:1062.5px;top:48px;width:6px;height:7px;background:#454545;"></div><svg style="left:1063.5px;top:50.5px" width="4" height="3" viewBox="0 0 4 3" fill="none" stroke="#9a9a9a" stroke-width="0.7"><path d="M0.5 0.5L2 2L3.5 0.5"/></svg><svg style="left:979.5px;top:59.5px" width="8" height="7" viewBox="0 0 8 7" fill="none" stroke="#d0d0d0" stroke-width="0.9"><path d="M3 1H7.5M5.2 1V6.5M0.5 3.5H3M1.7 3.5V6.5"/></svg><div style="left:988px;top:59.5px;width:29px;height:7px;background:#454545;"></div><span class="t" style="left:989.5px;top:60.7px;font-size:5px;line-height:5px;color:#c8c8c8;">38.1</span><span class="t" style="left:1000px;top:59.93px;font-size:6.50px;line-height:6.50px;letter-spacing:-0.59px;color:#d0d0d0;opacity:0.78">Ж</span><div style="left:1018px;top:59.5px;width:6.5px;height:7px;background:#454545;"></div><svg style="left:1019.2px;top:62px" width="4" height="3" viewBox="0 0 4 3" fill="none" stroke="#9a9a9a" stroke-width="0.7"><path d="M0.5 0.5L2 2L3.5 0.5"/></svg><svg style="left:1027px;top:59px" width="8" height="8" viewBox="0 0 8 8" fill="none" stroke="#d0d0d0" stroke-width="0.9"><path d="M4 0.5V4M2 4H6M1 6.5H7"/></svg><div style="left:1036px;top:59.5px;width:26.5px;height:7px;background:#454545;"></div><span class="t" style="left:1037.5px;top:60.7px;font-size:5px;line-height:5px;color:#c8c8c8;">68.54</span><span class="t" style="left:1051px;top:59.93px;font-size:6.50px;line-height:6.50px;letter-spacing:-0.59px;color:#d0d0d0;opacity:0.78">Ф</span><div style="left:1063px;top:59.5px;width:6.5px;height:7px;background:#454545;"></div><svg style="left:1064.2px;top:62px" width="4" height="3" viewBox="0 0 4 3" fill="none" stroke="#9a9a9a" stroke-width="0.7"><path d="M0.5 0.5L2 2L3.5 0.5"/></svg><svg style="left:979.5px;top:69.5px" width="8" height="8" viewBox="0 0 8 8" fill="none" stroke="#bcbcbc" stroke-width="0.7"><path d="M0.5 0.5L2 5L3.5 0.5M4.5 0.5V5M4.5 3L7 0.5M5 3L7 5"/></svg><div style="left:988px;top:69.5px;width:29px;height:7px;background:#454545;"></div><div style="left:1018px;top:69.5px;width:6.5px;height:7px;background:#454545;"></div><svg style="left:1019.2px;top:72px" width="4" height="3" viewBox="0 0 4 3" fill="none" stroke="#9a9a9a" stroke-width="0.7"><path d="M0.5 0.5L2 2L3.5 0.5"/></svg><div style="left:1027px;top:69px;width:8px;height:8px;background:#d0d0d0;border:1px solid #d0d0d0;background:#535353"></div><div style="left:1028.5px;top:71px;width:5px;height:3px;background:#cfcfcf;opacity:.7"></div><div style="left:1036px;top:69.5px;width:26.5px;height:7px;background:#454545;"></div><span class="t" style="left:1037.5px;top:70.7px;font-size:5px;line-height:5px;color:#c8c8c8;">20</span><div style="left:1063px;top:69.5px;width:6.5px;height:7px;background:#454545;"></div><svg style="left:1064.2px;top:72px" width="4" height="3" viewBox="0 0 4 3" fill="none" stroke="#9a9a9a" stroke-width="0.7"><path d="M0.5 0.5L2 2L3.5 0.5"/></svg><span class="t" style="left:980px;top:79.93px;font-size:9.10px;line-height:9.10px;letter-spacing:-0.83px;color:#d0d0d0;opacity:0.59">Ъ</span><div style="left:988px;top:81px;width:28px;height:7.5px;background:#454545;"></div><span class="t" style="left:989.5px;top:82.3px;font-size:5px;line-height:5px;color:#c8c8c8;">0%</span><div style="left:1017px;top:81px;width:6px;height:7.5px;background:#454545;"></div><svg style="left:1018px;top:83.5px" width="4" height="3" viewBox="0 0 4 3" fill="none" stroke="#9a9a9a" stroke-width="0.7"><path d="M0.5 0.5L2 2L3.5 0.5"/></svg><svg style="left:979.5px;top:92.5px" width="8" height="8" viewBox="0 0 8 8" fill="none" stroke="#d0d0d0" stroke-width="0.9"><path d="M3 1H7.5M5.2 1V7M0.5 3H3M1.7 3V7"/></svg><div style="left:988.3px;top:93.3px;width:22.7px;height:7.6px;background:#454545;"></div><span class="t" style="left:990px;top:94.8px;font-size:5px;line-height:5px;color:#c8c8c8;">100%</span><svg style="left:1035px;top:92.5px" width="8" height="9" viewBox="0 0 8 9" fill="none" stroke="#d0d0d0" stroke-width="0.9"><path d="M1 1H7M4 1V6M1 8H7"/></svg><div style="left:1044px;top:93.3px;width:22px;height:7.6px;background:#454545;"></div><span class="t" style="left:1045.5px;top:94.8px;font-size:5px;line-height:5px;color:#c8c8c8;">100%</span><span class="t" style="left:980px;top:102.93px;font-size:9.10px;line-height:9.10px;letter-spacing:-1.83px;color:#d0d0d0;opacity:0.72">Б</span><div style="left:988.3px;top:104px;width:22.7px;height:7.7px;background:#454545;"></div><span class="t" style="left:990px;top:105.4px;font-size:5px;line-height:5px;color:#c8c8c8;">0</span><span class="t" style="left:994px;top:104.63px;font-size:6.50px;line-height:6.50px;letter-spacing:-0.59px;color:#d0d0d0;opacity:0.78">Ж</span><span class="t" style="left:1029px;top:104.73px;font-size:6.50px;line-height:6.50px;letter-spacing:-0.09px;color:#d0d0d0;opacity:0.72">ФЫ</span><div style="left:1043.6px;top:104px;width:23.4px;height:8.5px;background:#f5edbe;box-shadow:0 0 0 .5px #3f3f3f"></div><span class="t" style="left:987.6px;top:119.9px;font-size:7.2px;line-height:7.2px;color:#d8d8d8;font-family:'Liberation Serif';font-weight:bold">T</span><span class="t" style="left:997.4px;top:119.9px;font-size:7.2px;line-height:7.2px;color:#bdbdbd;font-family:'Liberation Serif';font-weight:bold;font-style:italic">T</span><span class="t" style="left:1005.3px;top:119.9px;font-size:7.2px;line-height:7.2px;color:#d8d8d8;font-family:'Liberation Serif';font-weight:bold;letter-spacing:-.3px">TT</span><span class="t" style="left:1016.2px;top:119.9px;font-size:7.2px;line-height:7.2px;color:#d8d8d8;font-family:'Liberation Serif';font-weight:bold;letter-spacing:-.4px">Tr</span><span class="t" style="left:1027.3px;top:119.9px;font-size:7.2px;line-height:7.2px;color:#d8d8d8;font-family:'Liberation Serif';font-weight:bold">T</span><span class="t" style="left:1031.8px;top:119.2px;font-size:3.2px;line-height:3.2px;color:#cfcfcf;font-family:'Liberation Serif';font-weight:bold">1</span><span class="t" style="left:1037.8px;top:119.9px;font-size:7.2px;line-height:7.2px;color:#d8d8d8;font-family:'Liberation Serif';font-weight:bold">T</span><span class="t" style="left:1042.3px;top:123.7px;font-size:3.2px;line-height:3.2px;color:#cfcfcf;font-family:'Liberation Serif';font-weight:bold">1</span><span class="t" style="left:1047.8px;top:119.9px;font-size:7.2px;line-height:7.2px;color:#d8d8d8;font-family:'Liberation Serif';font-weight:bold">T</span><div style="left:1047.6px;top:126.5px;width:6px;height:0.7px;background:#d8d8d8;"></div><span class="t" style="left:1058px;top:119.9px;font-size:7.2px;line-height:7.2px;color:#d8d8d8;font-family:'Liberation Serif';font-weight:bold">T</span><div style="left:1057.5px;top:123.0px;width:6.5px;height:0.7px;background:#d8d8d8;"></div><div style="left:985px;top:130px;width:9.5px;height:9px;background:#3a3a3a;"></div><div style="left:995px;top:130px;width:9.5px;height:9px;background:#3a3a3a;"></div><span class="t" style="left:986.8px;top:131.3px;font-size:7.8px;line-height:7.8px;color:#d8d8d8;font-family:'Liberation Serif';font-weight:bold">fi</span><span class="t" style="left:997px;top:131.3px;font-size:7.8px;line-height:7.8px;color:#d8d8d8;font-family:'Liberation Serif';font-weight:bold;font-style:italic">σ</span><span class="t" style="left:1006.8px;top:131.3px;font-size:7.2px;line-height:7.2px;color:#b8b8b8;font-family:'Liberation Serif';font-weight:bold">ct</span><span class="t" style="left:1017px;top:131.3px;font-size:7.5px;line-height:7.5px;color:#8a8a8a;font-family:'Liberation Serif';font-style:italic">A</span><div style="left:1026.8px;top:131.3px;width:7px;height:0.8px;background:#d0d0d0;"></div><span class="t" style="left:1026.6px;top:132.3px;font-size:6.8px;line-height:6.8px;color:#c8c8c8;font-family:'Liberation Serif';font-weight:bold;letter-spacing:-.3px">aa</span><span class="t" style="left:1038px;top:131.3px;font-size:7.5px;line-height:7.5px;color:#8a8a8a;font-family:'Liberation Serif';font-style:italic">T</span><span class="t" style="left:1048px;top:131.3px;font-size:7px;line-height:7px;color:#8a8a8a;font-family:'Liberation Serif'">1</span><span class="t" style="left:1050.8px;top:131.1px;font-size:3.2px;line-height:3.2px;color:#8a8a8a;font-family:'Liberation Serif'">st</span><span class="t" style="left:1057.8px;top:131.3px;font-size:7.8px;line-height:7.8px;color:#bdbdbd;font-family:'Liberation Serif';font-weight:bold">½</span><div style="left:982px;top:144px;width:48px;height:8.3px;background:#454545;"></div><span class="t" style="left:985px;top:144.66px;font-size:7.15px;line-height:7.15px;letter-spacing:-1.15px;color:#d0d0d0;opacity:0.72">ЪЭ</span><svg style="left:1025px;top:147px" width="4" height="3" viewBox="0 0 4 3" fill="none" stroke="#9a9a9a" stroke-width="0.7"><path d="M0.5 0.5L2 2L3.5 0.5"/></svg><span class="t" style="left:1033px;top:144.73px;font-size:6.50px;line-height:6.50px;letter-spacing:0.41px;color:#d0d0d0;opacity:0.59">Б</span><div style="left:1041px;top:144px;width:27px;height:8.3px;background:#454545;"></div><span class="t" style="left:1045px;top:144.66px;font-size:7.15px;line-height:7.15px;letter-spacing:-1.15px;color:#d0d0d0;opacity:0.78">ЖЯ</span><svg style="left:1063px;top:147px" width="4" height="3" viewBox="0 0 4 3" fill="none" stroke="#9a9a9a" stroke-width="0.7"><path d="M0.5 0.5L2 2L3.5 0.5"/></svg><div style="left:978px;top:154.5px;width:102px;height:12.5px;background:#434343;"></div><div style="left:978px;top:155px;width:19px;height:12px;background:#535353;"></div><span class="t" style="left:983px;top:157.66px;font-size:7.15px;line-height:7.15px;letter-spacing:-1.65px;color:#d8d8d8;opacity:1.00">ФЫ</span><span class="t" style="left:1001px;top:157.73px;font-size:6.50px;line-height:6.50px;letter-spacing:-0.59px;color:#d0d0d0;opacity:0.59">ЪЭ</span><span class="t" style="left:1020px;top:157.73px;font-size:6.50px;line-height:6.50px;letter-spacing:-0.59px;color:#d0d0d0;opacity:0.59">БЮ</span><div style="left:1015.5px;top:156px;width:0.8px;height:11px;background:#3a3a3a;"></div><div style="left:1034.5px;top:156px;width:0.8px;height:11px;background:#3a3a3a;"></div><div style="left:1077px;top:160px;width:3px;height:0.8px;background:#bbb;"></div><div style="left:1077px;top:162px;width:3px;height:0.8px;background:#bbb;"></div><div style="left:978px;top:167px;width:102px;height:416px;background:#4d4d4d;"></div><div style="left:978px;top:167px;width:102px;height:37px;background:#535353;"></div><div style="left:978px;top:204px;width:100px;height:166.5px;background:#535353;"></div><div style="left:980px;top:171px;width:36px;height:8px;background:#454545;"></div><svg style="left:981.5px;top:172px" width="6" height="6" viewBox="0 0 6 6" fill="none" stroke="#cfcfcf" stroke-width="0.7"><circle cx="3.5" cy="2.5" r="1.8"/><path d="M2.2 3.8L0.6 5.5"/></svg><span class="t" style="left:988px;top:171.73px;font-size:6.50px;line-height:6.50px;letter-spacing:-1.09px;color:#d0d0d0;opacity:0.85">ЖЯ</span><svg style="left:1012px;top:174.5px" width="4" height="3" viewBox="0 0 4 3" fill="none" stroke="#9a9a9a" stroke-width="0.7"><path d="M0.5 0.5L2 2L3.5 0.5"/></svg><svg style="left:1023px;top:172.5px" width="6" height="5" viewBox="0 0 6 5" fill="none" stroke="#cfcfcf" stroke-width="0.7"><rect x=".5" y=".5" width="5" height="4"/></svg><svg style="left:1034px;top:172px" width="6" height="6" viewBox="0 0 6 6" fill="none" stroke="#cfcfcf" stroke-width="0.7"><circle cx="3" cy="3" r="2.3"/><path d="M1.5 4.5L4.5 1.5"/></svg><span class="t" style="left:1044px;top:172.3px;font-size:6px;line-height:6px;color:#cfcfcf;font-weight:bold">T</span><svg style="left:1054px;top:172px" width="6" height="6" viewBox="0 0 6 6" fill="none" stroke="#cfcfcf" stroke-width="0.7"><rect x="1" y="1" width="4" height="4" stroke-dasharray="1 .8"/></svg><svg style="left:1065px;top:172px" width="6" height="6" viewBox="0 0 6 6" fill="none" stroke="#cfcfcf" stroke-width="0.7"><path d="M1 5.5V1H4L5.5 2.5V5.5Z"/></svg><div style="left:1076px;top:171.5px;width:5px;height:7px;background:#e0e0e0;border-radius:3px 0 0 3px;opacity:.8"></div><div style="left:980px;top:183px;width:49px;height:8.2px;background:#454545;"></div><span class="t" style="left:984px;top:183.79px;font-size:6.89px;line-height:6.89px;letter-spacing:-0.93px;color:#d0d0d0;opacity:0.78">ФЫ</span><svg style="left:1024.5px;top:186px" width="4" height="3" viewBox="0 0 4 3" fill="none" stroke="#9a9a9a" stroke-width="0.7"><path d="M0.5 0.5L2 2L3.5 0.5"/></svg><span class="t" style="left:1033px;top:183.79px;font-size:6.89px;line-height:6.89px;letter-spacing:-0.68px;color:#d0d0d0;opacity:0.65">ЪЭЩБ</span><div style="left:1057px;top:183px;width:16.5px;height:8.2px;background:#454545;"></div><span class="t" style="left:1058.5px;top:184.8px;font-size:4.8px;line-height:4.8px;color:#c8c8c8;">100%</span><div style="left:1074.5px;top:183px;width:5.5px;height:8.2px;background:#454545;"></div><svg style="left:1075.5px;top:186px" width="4" height="3" viewBox="0 0 4 3" fill="none" stroke="#9a9a9a" stroke-width="0.7"><path d="M0.5 0.5L2 2L3.5 0.5"/></svg><span class="t" style="left:981px;top:195.19px;font-size:6.89px;line-height:6.89px;letter-spacing:0.07px;color:#d0d0d0;opacity:0.65">БЮ</span><svg style="left:998px;top:195.5px" width="6" height="6" viewBox="0 0 6 6" fill="none" stroke="#a8a8a8" stroke-width="0.7"><rect x="1" y="1" width="4" height="4" stroke-dasharray=".8 .6"/></svg><svg style="left:1007px;top:195.5px" width="6" height="6" viewBox="0 0 6 6" fill="none" stroke="#c8c8c8" stroke-width="0.9"><path d="M1 5L5 1"/></svg><svg style="left:1016px;top:195.5px" width="6" height="6" viewBox="0 0 6 6" fill="none" stroke="#c8c8c8" stroke-width="0.9"><path d="M3 0.5V5.5M0.5 3H5.5"/></svg><svg style="left:1025px;top:195.5px" width="6" height="6" viewBox="0 0 6 6" fill="none" stroke="#c8c8c8" stroke-width="0.8"><path d="M1 1V5H5"/><path d="M3 1H5V3"/></svg><svg style="left:1034px;top:195px" width="6" height="7" viewBox="0 0 6 7" fill="none" stroke="#c8c8c8" stroke-width="0.7"><rect x="1" y="3" width="4" height="3.3" fill="#c8c8c8"/><path d="M1.8 3V1.8A1.2 1.2 0 0 1 4.2 1.8V3"/></svg><span class="t" style="left:1043px;top:195.19px;font-size:6.89px;line-height:6.89px;letter-spacing:0.07px;color:#d0d0d0;opacity:0.65">ЖЯ</span><div style="left:1057px;top:194.8px;width:16.5px;height:7.3px;background:#454545;"></div><span class="t" style="left:1058.5px;top:196px;font-size:4.8px;line-height:4.8px;color:#c8c8c8;">100%</span><div style="left:1074.5px;top:194.8px;width:5.5px;height:7.3px;background:#454545;"></div><svg style="left:1075.5px;top:197.5px" width="4" height="3" viewBox="0 0 4 3" fill="none" stroke="#9a9a9a" stroke-width="0.7"><path d="M0.5 0.5L2 2L3.5 0.5"/></svg><div style="left:978px;top:203.5px;width:102px;height:0.8px;background:#474747;"></div><div style="left:990px;top:204px;width:0.7px;height:167px;background:#4a4a4a;"></div><div style="left:978px;top:221.7px;width:100px;height:0.7px;background:#474747;"></div><div style="left:978px;top:239.3px;width:100px;height:0.7px;background:#474747;"></div><div style="left:978px;top:265.8px;width:100px;height:0.7px;background:#474747;"></div><div style="left:978px;top:282.7px;width:100px;height:0.7px;background:#474747;"></div><div style="left:978px;top:300.4px;width:100px;height:0.7px;background:#474747;"></div><div style="left:978px;top:318.2px;width:100px;height:0.7px;background:#474747;"></div><div style="left:978px;top:335.9px;width:100px;height:0.7px;background:#474747;"></div><div style="left:978px;top:352.7px;width:100px;height:0.7px;background:#474747;"></div><div style="left:978px;top:370.4px;width:100px;height:0.7px;background:#474747;"></div><div style="left:990.5px;top:336.3px;width:88px;height:16.4px;background:#6a6a6a;"></div><div style="left:981.5px;top:210.3px;width:5px;height:5px;background:transparent;border:.6px solid #5e5e5e"></div><div style="left:981.5px;top:228.0px;width:5px;height:5px;background:transparent;border:.6px solid #5e5e5e"></div><div style="left:981.5px;top:243.5px;width:5px;height:5px;background:transparent;border:.6px solid #5e5e5e"></div><div style="left:981.5px;top:271.7px;width:5px;height:5px;background:transparent;border:.6px solid #5e5e5e"></div><div style="left:981.5px;top:289.0px;width:5px;height:5px;background:transparent;border:.6px solid #5e5e5e"></div><div style="left:981.5px;top:306.8px;width:5px;height:5px;background:transparent;border:.6px solid #5e5e5e"></div><div style="left:981.5px;top:324.5px;width:5px;height:5px;background:transparent;border:.6px solid #5e5e5e"></div><svg style="left:981px;top:343px" width="7" height="5" viewBox="0 0 7 5" fill="none" stroke="#d8d8d8" stroke-width="0.75"><path d="M0.6 2.5C2 0.4 5 0.4 6.4 2.5C5 4.6 2 4.6 0.6 2.5Z"/><circle cx="3.5" cy="2.5" r="1.1" fill="#d8d8d8" stroke="none"/></svg><svg style="left:981px;top:360.5px" width="7" height="5" viewBox="0 0 7 5" fill="none" stroke="#d8d8d8" stroke-width="0.75"><path d="M0.6 2.5C2 0.4 5 0.4 6.4 2.5C5 4.6 2 4.6 0.6 2.5Z"/><circle cx="3.5" cy="2.5" r="1.1" fill="#d8d8d8" stroke="none"/></svg><div style="left:993px;top:207px;width:9.5px;height:13px;background:linear-gradient(160deg,#f1e6dc 0%,#e9d3c3 40%,#d99a86 65%,#efe2d6 100%);border:.5px solid #777"></div><div style="left:998px;top:215px;width:3px;height:3px;background:#d77a5e;border-radius:50%;opacity:.8"></div><div style="left:993px;top:225px;width:10.5px;height:12.5px;background:linear-gradient(180deg,#efe4d4,#e8dac6);border:.5px solid #777"></div><div style="left:996.5px;top:229.5px;width:3.5px;height:5px;background:#b38c55;opacity:.6;border-radius:1px"></div><span class="t" style="left:1006px;top:210.70px;font-size:6.76px;line-height:6.76px;letter-spacing:-1.31px;color:#d0d0d0;opacity:0.78">ФЫ</span><span class="t" style="left:1017.5px;top:211.8px;font-size:5.4px;line-height:5.4px;color:#bdbdbd;">28</span><span class="t" style="left:1007px;top:228.70px;font-size:6.76px;line-height:6.76px;letter-spacing:-1.31px;color:#d0d0d0;opacity:0.78">ЪЭ</span><span class="t" style="left:1019px;top:229.8px;font-size:5.4px;line-height:5.4px;color:#bdbdbd;">27</span><svg style="left:992px;top:242px" width="3" height="5" viewBox="0 0 3 5" fill="none" stroke="#bdbdbd" stroke-width="0.7"><path d="M0.5 0.5L2.5 2.5L0.5 4.5"/></svg><div style="left:998px;top:243px;width:6px;height:5px;background:#d4d4d4;border-radius:.5px"></div><span class="t" style="left:1009px;top:243.3px;font-size:4.5px;line-height:4.5px;color:#bdbdbd;">WOMAN</span><span class="t" style="left:1066.5px;top:242.5px;font-size:5px;line-height:5px;color:#cfcfcf;font-style:italic">fx</span><div style="left:1073.5px;top:240px;width:4.5px;height:11.5px;background:#464646;"></div><svg style="left:1074.2px;top:243.5px" width="3" height="2" viewBox="0 0 3 2" fill="none" stroke="#aaa" stroke-width="0.5"><path d="M0.2 1.8L1.5 .5L2.8 1.8"/></svg><svg style="left:1002.5px;top:252.5px" width="7" height="5" viewBox="0 0 7 5" fill="none" stroke="#c8c8c8" stroke-width="0.75"><path d="M0.6 2.5C2 0.4 5 0.4 6.4 2.5C5 4.6 2 4.6 0.6 2.5Z"/><circle cx="3.5" cy="2.5" r="1.1" fill="#c8c8c8" stroke="none"/></svg><span class="t" style="left:1011px;top:251.20px;font-size:6.76px;line-height:6.76px;letter-spacing:-1.31px;color:#d0d0d0;opacity:0.78">БЮ</span><svg style="left:1009.5px;top:260.5px" width="7" height="5" viewBox="0 0 7 5" fill="none" stroke="#c8c8c8" stroke-width="0.75"><path d="M0.6 2.5C2 0.4 5 0.4 6.4 2.5C5 4.6 2 4.6 0.6 2.5Z"/><circle cx="3.5" cy="2.5" r="1.1" fill="#c8c8c8" stroke="none"/></svg><span class="t" style="left:1018px;top:259.20px;font-size:6.76px;line-height:6.76px;letter-spacing:-0.81px;color:#d0d0d0;opacity:0.78">ЖЯДФ</span><div style="left:993px;top:269px;width:12.5px;height:12.5px;background:#f3f0e6;border:.5px solid #888"></div><div style="left:994px;top:270px;width:10.5px;height:10.5px;border-radius:50%;background:radial-gradient(circle,#f3dc95 0%,#e9c86a 55%,#dcb553 100%)"></div><div style="left:993px;top:287px;width:12.5px;height:12.5px;background:#f3f0e6;border:.5px solid #888"></div><div style="left:994px;top:288px;width:10.5px;height:10.5px;border-radius:50%;background:radial-gradient(circle,#f3dc95 0%,#e9c86a 55%,#dcb553 100%)"></div><span class="t" style="left:1011px;top:274.20px;font-size:6.76px;line-height:6.76px;letter-spacing:-1.31px;color:#d0d0d0;opacity:0.78">ФЫ</span><span class="t" style="left:1022.3px;top:275.3px;font-size:5.4px;line-height:5.4px;color:#bdbdbd;">11</span><span class="t" style="left:1029px;top:274.20px;font-size:6.76px;line-height:6.76px;letter-spacing:-1.06px;color:#d0d0d0;opacity:0.72">ЪЭ</span><span class="t" style="left:1011px;top:290.70px;font-size:6.76px;line-height:6.76px;letter-spacing:-1.31px;color:#d0d0d0;opacity:0.78">БЮ</span><span class="t" style="left:1022.3px;top:291.8px;font-size:5.4px;line-height:5.4px;color:#bdbdbd;">11</span><span class="t" style="left:1029px;top:290.70px;font-size:6.76px;line-height:6.76px;letter-spacing:-1.06px;color:#d0d0d0;opacity:0.72">ЖЯ</span><span class="t" style="left:1040.5px;top:291.8px;font-size:5.4px;line-height:5.4px;color:#bdbdbd;">2</span><div style="left:993px;top:304px;width:11px;height:12.5px;background-color:#fafafa;background-image:linear-gradient(45deg,#c9c9c9 25%,transparent 25%,transparent 75%,#c9c9c9 75%),linear-gradient(45deg,#c9c9c9 25%,transparent 25%,transparent 75%,#c9c9c9 75%);background-size:3px 3px;background-position:0 0,1.5px 1.5px;border:.5px solid #888"></div><span class="t" style="left:1008px;top:308.70px;font-size:6.76px;line-height:6.76px;letter-spacing:-1.31px;color:#d0d0d0;opacity:0.78">ФЫ</span><span class="t" style="left:1020.5px;top:309.8px;font-size:5.4px;line-height:5.4px;color:#bdbdbd;">26</span><div style="left:993px;top:321px;width:9.5px;height:13px;background:linear-gradient(160deg,#dfe6f4 0%,#a8b6d2 55%,#5a6d96 100%);border:.5px solid #888"></div><div style="left:997.5px;top:329px;width:4.5px;height:4.5px;background:#3b3b3b;border:.5px solid #ddd"></div><span class="t" style="left:1006px;top:326.3px;font-size:5px;line-height:5px;color:#bdbdbd;letter-spacing:-.12px">51dfb7f1a6ead239feba002c...</span><div style="left:992px;top:338.5px;width:10px;height:12.5px;background:transparent;border:.6px dashed #cfcfcf"></div><div style="left:995px;top:341.5px;width:5px;height:7px;background:#6a6a6a;border:.6px solid #d8d8d8"></div><span class="t" style="left:1003px;top:342.70px;font-size:6.76px;line-height:6.76px;letter-spacing:-0.81px;color:#d0d0d0;opacity:0.91">ЪЭ</span><span class="t" style="left:1015.5px;top:343.8px;font-size:5.4px;line-height:5.4px;color:#d0d0d0;">15</span><span class="t" style="left:1022.5px;top:342.70px;font-size:6.76px;line-height:6.76px;letter-spacing:-1.06px;color:#d0d0d0;opacity:0.85">БЮ</span><span class="t" style="left:1034.5px;top:343.8px;font-size:5.4px;line-height:5.4px;color:#d0d0d0;">2</span><div style="left:993px;top:356px;width:9.5px;height:12.5px;background:#f5edbe;border:.5px solid #8a8a8a"></div><span class="t" style="left:1006px;top:360.20px;font-size:6.76px;line-height:6.76px;letter-spacing:-1.31px;color:#d0d0d0;opacity:0.78">ЖЯ</span><span class="t" style="left:1018.5px;top:361.3px;font-size:5.4px;line-height:5.4px;color:#bdbdbd;">0</span><div style="left:978px;top:583px;width:102px;height:0.8px;background:#474747;"></div><div style="left:978px;top:583.8px;width:102px;height:6.2px;background:#535353;"></div><svg style="left:1000px;top:586px" width="6" height="4" viewBox="0 0 6 4" fill="none" stroke="#8a8a8a" stroke-width="0.6"><path d="M1.5 .5H.5V3.5H2.5M3.5 .5H5.5V3.5H4.5"/></svg><span class="t" style="left:1012px;top:585.5px;font-size:5px;line-height:5px;color:#cfcfcf;font-style:italic">fx</span><div style="left:1021.5px;top:585.5px;width:6px;height:5px;background:#e6e6e6;"></div><div style="left:1023.2px;top:586.8px;width:2.6px;height:2.6px;background:#535353;border-radius:50%"></div><svg style="left:1035px;top:585.5px" width="5" height="5" viewBox="0 0 5 5" fill="none" stroke="#d4d4d4" stroke-width="0.8"><circle cx="2.5" cy="2.5" r="2" fill="#535353"/><path d="M1 4L4 1"/></svg><div style="left:1045px;top:586px;width:6px;height:4px;background:#e0e0e0;"></div><svg style="left:1057.5px;top:585.5px" width="6" height="5" viewBox="0 0 6 5" fill="none" stroke="#cfcfcf" stroke-width="0.7"><rect x=".5" y="1" width="4" height="4"/><path d="M3 .5H5.5V3"/></svg><svg style="left:1068.5px;top:585px" width="6" height="5" viewBox="0 0 6 5" fill="none" stroke="#cfcfcf" stroke-width="0.7"><path d="M1 1.5H5M1.5 1.5V5H4.5V1.5M2.3 1.5V.5H3.7V1.5"/></svg></body></html>
